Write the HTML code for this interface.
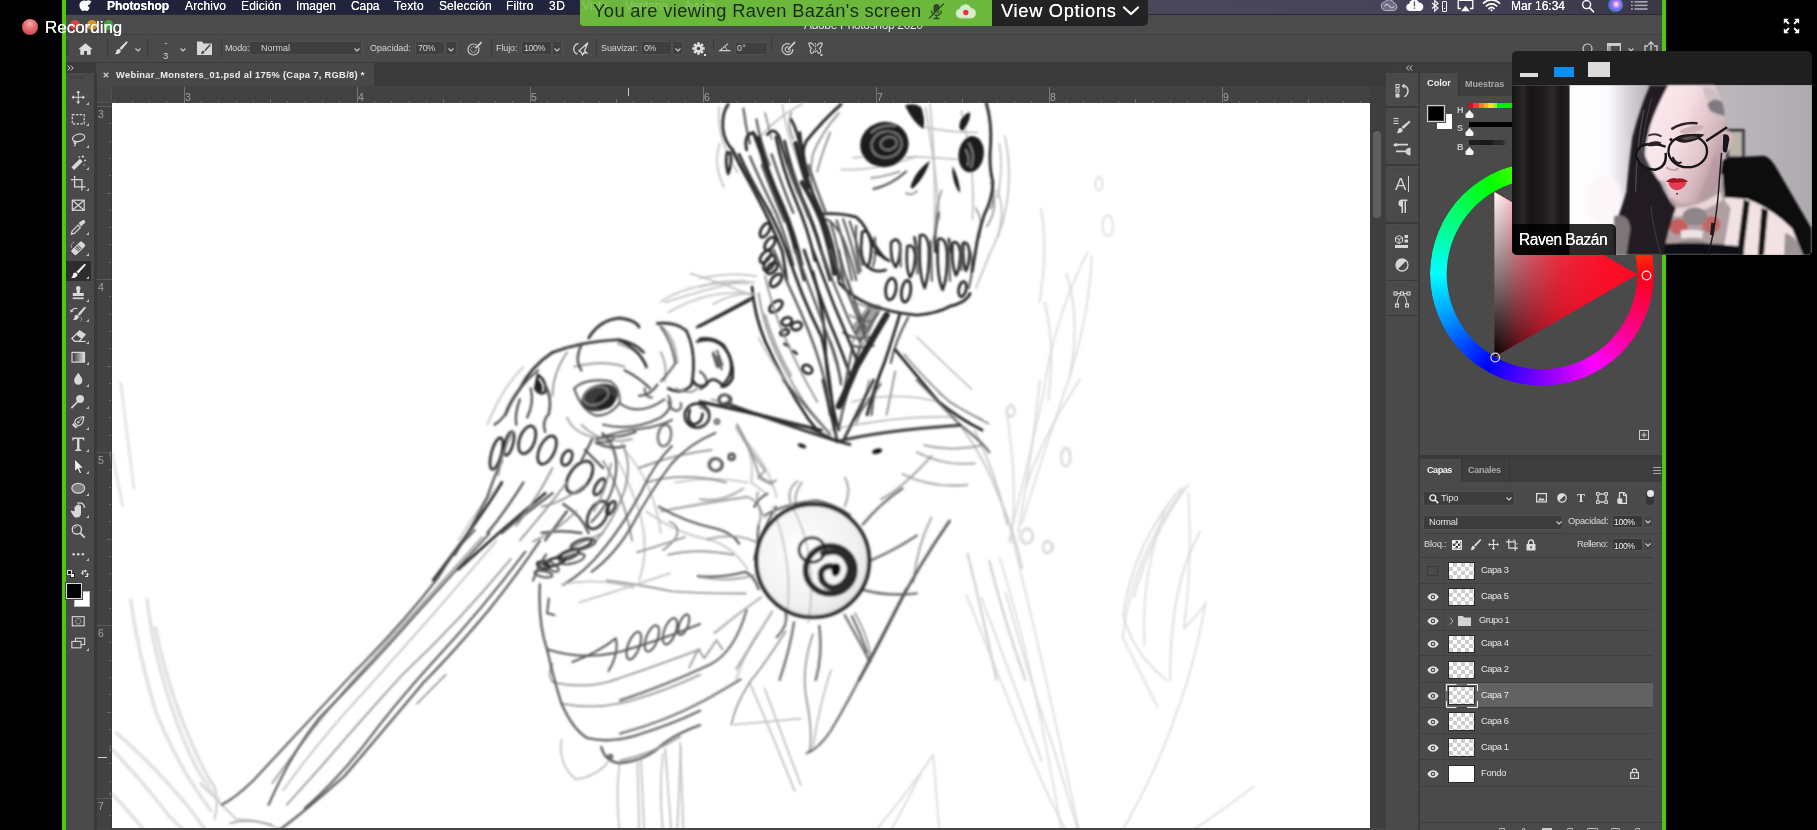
<!DOCTYPE html>
<html><head><meta charset="utf-8">
<style>
*{box-sizing:border-box;margin:0;padding:0}
html,body{width:1817px;height:830px;overflow:hidden;background:#000;font-family:"Liberation Sans",sans-serif;}
.a{position:absolute}
.t{position:absolute;white-space:nowrap;color:#ddd;line-height:1;will-change:transform}
svg{overflow:visible}
</style></head><body>
<!-- base -->

<div class="a" style="left:62px;top:0;width:4px;height:830px;background:#4cc713"></div>
<div class="a" style="left:1662px;top:0;width:4px;height:830px;background:#4cc713"></div>
<div class="a" id="ps" style="left:66px;top:0;width:1596px;height:830px;background:#4a4a4a;overflow:hidden">
<div class="a" style="left:0;top:0;width:1596px;height:14px;background:linear-gradient(90deg,#1f2239 0,#22253f 500px,#3a3750 800px,#4b4659 1100px,#46425a 1350px,#3b3849 1596px)"></div>
<div class="a" style="left:0;top:14px;width:1596px;height:21px;background:#4b4b4b;border-top:1px solid #2a2a30;border-bottom:1px solid #414141"></div>
<div class="a" style="left:0;top:35px;width:1596px;height:27px;background:#4a4a4a"></div>
<div class="a" style="left:0;top:62px;width:1596px;height:25px;background:#3a3a3a"></div>
<div class="a" style="left:30px;top:63px;width:278px;height:23px;background:#484848"></div>
<div class="a" style="left:0;top:73px;width:29px;height:757px;background:#4a4a4a"></div>
<div class="a" style="left:31px;top:86px;width:1273px;height:17px;background:#424242"></div>
<div class="a" style="left:31px;top:103px;width:15px;height:727px;background:#424242"></div>
<div class="a" style="left:1304px;top:86px;width:16px;height:744px;background:#3e3e40"></div>
<div class="a" style="left:1320px;top:62px;width:276px;height:768px;background:#3a3a3a"></div>
<div class="a" style="left:1320px;top:73px;width:32px;height:757px;background:#4a4a4a"></div>
<div class="a" style="left:1354px;top:73px;width:242px;height:382px;background:#4a4a4a"></div>
<div class="a" style="left:1354px;top:459px;width:242px;height:371px;background:#4a4a4a"></div>
</div>
<div class="a" id="cv" style="left:112px;top:103px;width:1258px;height:727px;background:#fff;overflow:hidden"></div>

<!-- canvas -->
<svg class="a" style="left:112px;top:103px" width="1258" height="727" viewBox="112 103 1258 727"><defs><filter id="sb" x="-2%" y="-2%" width="104%" height="104%"><feGaussianBlur stdDeviation="0.9"/></filter><filter id="sb2" x="-2%" y="-2%" width="104%" height="104%"><feGaussianBlur stdDeviation="1.2"/></filter><radialGradient id="eg" cx=".4" cy=".4" r=".7"><stop offset="0" stop-color="#fff"/><stop offset=".7" stop-color="#f1f1f1"/><stop offset="1" stop-color="#dcdcdc"/></radialGradient></defs>
<g filter="url(#sb)">
<g transform="translate(600,100) scale(0.36153)">
<g fill="none" stroke="#bdbdbd" stroke-width="4.98" opacity="0.9" stroke-linecap="round" stroke-linejoin="round">
<path d="M330 20Q320 100 380 200"/>
<path d="M1100 250Q1130 330 1080 420Q1060 470 1040 520"/>
<path d="M900 20Q930 200 940 330"/>
<path d="M700 160Q800 150 1000 165"/>
<path d="M560 10Q470 60 430 120"/>
<path d="M1120 100Q1150 250 1100 380"/>
<path d="M250 480Q320 500 420 540"/>
<path d="M180 560Q300 520 400 500"/>
<path d="M1000 30Q1040 200 1030 330"/>
</g>
<g fill="none" stroke="#d6d6d6" stroke-width="4.98" opacity="0.9" stroke-linecap="round" stroke-linejoin="round">
<path d="M1230 560Q1260 680 1240 830"/>
<path d="M1290 480Q1330 600 1300 760"/>
<path d="M1220 300Q1240 420 1215 560"/>
</g>
<g fill="none" stroke="#8e8e8e" stroke-width="4.98" opacity="0.9" stroke-linecap="round" stroke-linejoin="round">
<path d="M1085 255Q1102 300 1070 350"/>
<path d="M1040 300Q1060 330 1050 380"/>
<path d="M930 380Q925 300 945 250"/>
</g>
<g fill="none" stroke="#2a2a2a" stroke-width="7.47" opacity="1" stroke-linecap="round" stroke-linejoin="round">
<path d="M725 365Q745 355 750 395Q752 440 740 462Q725 450 722 410z"/>
<path d="M805 395Q820 375 830 400Q832 440 818 462Q803 445 805 395z"/>
<path d="M850 405Q868 395 872 430Q870 475 858 490Q845 470 850 405z"/>
<path d="M885 375Q905 365 910 410Q912 480 898 520Q880 480 885 375z"/>
<path d="M935 385Q955 375 960 420Q962 490 948 525Q930 490 935 385z"/>
<path d="M975 395Q992 385 997 425Q995 470 985 485Q972 460 975 395z"/>
<path d="M1005 395Q1020 390 1022 425Q1020 460 1012 472Q1002 450 1005 395z"/>
<path d="M745 375Q770 420 790 440"/>
<path d="M760 420L800 445"/>
<path d="M740 460Q760 480 790 470"/>
<path d="M870 380L875 410"/>
<path d="M925 380L928 420"/>
<path d="M965 385L968 420"/>
</g>
<g fill="none" stroke="#555" stroke-width="6.47" opacity="0.9" stroke-linecap="round" stroke-linejoin="round">
<path d="M830 395L832 460"/>
<path d="M875 400L878 480"/>
<path d="M915 390L918 500"/>
<path d="M965 395L968 500"/>
<path d="M1000 400L1000 470"/>
<path d="M760 380Q765 430 755 460"/>
<path d="M1025 420Q1035 470 1020 520"/>
</g>
</g>
<g transform="translate(700,100) scale(0.21692)">
<g fill="none" stroke="#bdbdbd" stroke-width="8.30" opacity="0.9" stroke-linecap="round" stroke-linejoin="round">
<path d="M380 20Q400 200 520 420"/>
<path d="M1060 20Q1090 300 1080 620"/>
<path d="M1010 120Q1150 150 1280 150"/>
<path d="M650 320Q800 330 1000 260"/>
<path d="M1380 200Q1400 330 1370 450"/>
<path d="M90 200Q60 300 110 400"/>
</g>
<g fill="none" stroke="#8e8e8e" stroke-width="9.13" opacity="0.9" stroke-linecap="round" stroke-linejoin="round">
<path d="M640 60Q560 150 520 250Q500 350 520 420"/>
<path d="M600 150Q560 250 540 330"/>
<path d="M790 360Q850 352 920 330"/>
<path d="M950 430Q980 442 1000 420"/>
<path d="M1340 380Q1370 420 1340 500"/>
<path d="M300 60Q320 140 330 180"/>
<path d="M420 60Q400 120 430 180"/>
<path d="M190 300Q250 420 330 520"/>
</g>
<g fill="none" stroke="#555" stroke-width="10.79" opacity="0.95" stroke-linecap="round" stroke-linejoin="round">
<path d="M800 410Q880 392 950 330"/>
<path d="M200 40Q210 120 230 200"/>
<path d="M260 90Q280 200 320 300"/>
<path d="M600 560Q640 680 660 830"/>
<path d="M630 555Q670 680 700 830"/>
<path d="M660 550Q700 660 730 800"/>
<path d="M690 560Q720 650 750 760"/>
<path d="M720 580Q712 680 740 790"/>
<path d="M570 545Q620 560 660 640Q700 740 720 830"/>
<path d="M1100 520Q1090 580 1080 640"/>
</g>
<g fill="none" stroke="#2a2a2a" stroke-width="13.28" opacity="1" stroke-linecap="round" stroke-linejoin="round">
<path d="M130 20Q100 60 105 130Q110 190 150 230Q180 300 230 380"/>
<path d="M125 240Q115 290 130 340Q150 290 140 245z"/>
<path d="M215 230Q200 160 245 150Q270 180 290 280Q330 420 400 560Q440 680 480 830"/>
<path d="M310 160Q340 120 365 170Q400 300 450 420Q520 560 560 700L600 830"/>
<path d="M420 90Q450 140 470 250Q490 380 560 520Q620 660 640 830"/>
<path d="M245 150Q300 300 370 470Q420 600 440 700"/>
<path d="M180 250Q230 360 300 480Q380 620 420 760"/>
<path d="M350 170Q380 320 440 460Q500 600 530 740"/>
<path d="M650 20Q560 100 490 190Q470 230 480 270"/>
<path d="M570 525Q650 520 720 540Q770 580 790 660L850 730"/>
<path d="M1320 15Q1345 100 1340 200Q1330 300 1350 380Q1350 450 1310 530Q1280 620 1270 700L1255 790"/>
</g>
<g fill="none" stroke="#2a2a2a" stroke-width="13.28" opacity="1" stroke-linecap="round" stroke-linejoin="round">
<path d="M270 170Q310 330 380 480Q440 620 470 760"/>
<path d="M390 190Q420 320 470 450Q530 580 560 700"/>
<path d="M150 230Q200 330 260 440Q330 570 380 700L400 830"/>
<path d="M460 150Q470 250 500 350"/>
<ellipse cx="300" cy="600" rx="36" ry="18" transform="rotate(-60 300 600)"/>
<ellipse cx="322" cy="662" rx="34" ry="18" transform="rotate(-55 322 662)"/>
<ellipse cx="302" cy="722" rx="34" ry="18" transform="rotate(-50 302 722)"/>
<ellipse cx="332" cy="775" rx="32" ry="18" transform="rotate(-45 332 775)"/>
</g>
<g fill="none" stroke="#555" stroke-width="11.62" opacity="0.95" stroke-linecap="round" stroke-linejoin="round">
<path d="M330 250Q380 400 430 520"/>
<path d="M230 260Q290 400 350 520Q400 640 430 760"/>
<path d="M500 300Q540 420 580 520"/>
<path d="M410 300Q450 420 500 540"/>
<path d="M285 300Q330 420 390 560"/>
</g>
<g fill="none" stroke="#2a2a2a" stroke-width="21.57" opacity="1" stroke-linecap="round" stroke-linejoin="round">
<path d="M470 380Q520 460 560 560Q600 680 620 800"/>
<path d="M440 200Q470 320 500 400"/>
</g>
<g fill="#1b1b1b" opacity="1" stroke="none">
<ellipse cx="850" cy="205" rx="112" ry="104" transform="rotate(-15 850 205)"/>
<ellipse cx="1250" cy="250" rx="58" ry="84" transform="rotate(8 1250 250)"/>
<path d="M945 25Q990 10 1020 35Q1040 90 1030 135Q980 100 945 25z"/>
<path d="M1195 120Q1200 70 1245 55Q1250 90 1215 140Q1200 150 1195 120z"/>
<path d="M1060 280Q1040 350 985 405Q965 415 975 385Q1000 320 1060 280z"/>
<path d="M1165 305Q1195 360 1200 430Q1180 410 1170 370Q1160 330 1165 305z"/>
</g>
<g fill="none" stroke="#8a8a8a" stroke-width="9.96" opacity="0.8" stroke-linecap="round" stroke-linejoin="round">
<ellipse cx="860" cy="205" rx="70" ry="60" transform="rotate(-15 860 205)"/>
<ellipse cx="870" cy="200" rx="38" ry="30" transform="rotate(-15 870 200)"/>
<path d="M790 150Q830 110 900 120"/>
<path d="M1240 200Q1270 250 1250 310"/>
<path d="M1225 230Q1245 260 1235 300"/>
</g>
</g>
<g transform="translate(700,250) scale(0.21692)">
<g fill="none" stroke="#bdbdbd" stroke-width="8.30" opacity="0.9" stroke-linecap="round" stroke-linejoin="round">
<path d="M0 130Q150 100 260 120"/>
<path d="M0 170Q100 130 250 150"/>
<path d="M1000 400Q1100 500 1250 640"/>
<path d="M600 830Q900 760 1200 770"/>
<path d="M1100 660Q1200 740 1300 780"/>
<path d="M700 700Q900 650 1100 700"/>
<path d="M60 250Q150 200 230 200"/>
</g>
<g fill="none" stroke="#8e8e8e" stroke-width="9.13" opacity="0.9" stroke-linecap="round" stroke-linejoin="round">
<path d="M270 200Q290 340 350 470Q420 620 520 760"/>
<path d="M940 480Q1040 600 1150 700Q1250 760 1330 800"/>
<path d="M700 240Q760 260 820 270"/>
<path d="M690 300Q740 330 800 330"/>
<path d="M300 300Q340 440 420 580"/>
<path d="M780 600Q760 700 720 800"/>
<path d="M900 560Q880 660 860 760"/>
</g>
<g fill="none" stroke="#555" stroke-width="10.79" opacity="0.95" stroke-linecap="round" stroke-linejoin="round">
<path d="M640 0Q660 100 700 200"/>
<path d="M560 0Q600 120 660 260Q700 360 740 430"/>
<path d="M960 310Q900 420 880 520"/>
<path d="M820 290Q780 360 740 420"/>
<path d="M780 280Q750 330 720 380"/>
<path d="M60 480L80 540"/>
<path d="M80 490L100 550"/>
<path d="M0 560Q30 580 30 610Q20 640 0 640"/>
<ellipse cx="115" cy="690" rx="30" ry="22" transform="rotate(0 115 690)"/>
<path d="M700 440Q760 460 800 440"/>
<path d="M660 380Q720 420 790 400"/>
<path d="M850 520Q800 640 790 760"/>
</g>
<g fill="none" stroke="#2a2a2a" stroke-width="13.28" opacity="1" stroke-linecap="round" stroke-linejoin="round">
<path d="M640 150Q700 220 780 250Q880 290 1000 300Q1100 290 1150 260Q1230 240 1245 200"/>
<ellipse cx="880" cy="180" rx="24" ry="50" transform="rotate(8 880 180)"/>
<ellipse cx="950" cy="190" rx="21" ry="50" transform="rotate(8 950 190)"/>
<ellipse cx="1210" cy="180" rx="17" ry="35" transform="rotate(12 1210 180)"/>
<path d="M920 300Q890 400 850 520Q800 640 770 760"/>
<path d="M900 460Q1000 580 1100 700Q1200 780 1300 830"/>
<path d="M400 0Q460 200 560 400Q600 560 620 830"/>
<path d="M480 0Q540 180 600 340Q660 480 700 600"/>
<path d="M520 100Q580 300 580 500Q600 700 640 830"/>
<path d="M240 170Q250 300 300 420Q380 600 500 780L540 830"/>
<path d="M230 230Q120 290 0 350"/>
<path d="M0 700Q200 740 420 800L560 830"/>
<ellipse cx="320" cy="60" rx="40" ry="20" transform="rotate(-60 320 60)"/>
<ellipse cx="350" cy="140" rx="35" ry="19" transform="rotate(-50 350 140)"/>
<ellipse cx="350" cy="260" rx="35" ry="20" transform="rotate(-40 350 260)"/>
<ellipse cx="400" cy="330" rx="24" ry="18" transform="rotate(-20 400 330)"/>
<ellipse cx="445" cy="350" rx="24" ry="18" transform="rotate(-20 445 350)"/>
<ellipse cx="390" cy="380" rx="20" ry="13" transform="rotate(-20 390 380)"/>
<path d="M390 432L410 444"/>
<path d="M430 466L445 478"/>
<ellipse cx="495" cy="550" rx="24" ry="18" transform="rotate(35 495 550)"/>
<path d="M0 410Q60 400 110 440Q160 520 150 590Q130 630 100 630"/>
</g>
<g fill="none" stroke="#555" stroke-width="11.62" opacity="0.95" stroke-linecap="round" stroke-linejoin="round">
<path d="M340 0Q400 150 470 300Q540 460 580 620L600 760"/>
<path d="M440 0Q500 160 560 320Q620 470 650 600"/>
<path d="M600 0Q640 100 690 220Q740 340 770 420"/>
<path d="M680 140Q720 260 760 360"/>
<path d="M700 460Q680 560 660 680"/>
<path d="M740 440Q700 560 680 660Q650 760 640 830"/>
<path d="M600 420Q640 520 650 620"/>
</g>
<g fill="none" stroke="#2a2a2a" stroke-width="12.45" opacity="1" stroke-linecap="round" stroke-linejoin="round">
<path d="M520 0Q570 130 620 260Q680 400 720 500"/>
</g>
<g fill="none" stroke="#8e8e8e" stroke-width="9.13" opacity="0.9" stroke-linecap="round" stroke-linejoin="round">
<path d="M300 120Q330 260 390 400Q450 540 540 700"/>
<path d="M760 300Q730 380 700 430"/>
<path d="M800 330Q770 400 745 450"/>
</g>
<g fill="none" stroke="#2a2a2a" stroke-width="29.87" opacity="1" stroke-linecap="round" stroke-linejoin="round">
<path d="M860 300Q800 400 720 540Q680 640 640 720"/>
</g>
<g fill="none" stroke="#444" stroke-width="37.34" opacity="0.5" stroke-linecap="round" stroke-linejoin="round">
<path d="M820 270Q780 330 740 380"/>
<path d="M790 265Q760 310 725 350"/>
</g>
</g>
<g transform="translate(350,280) scale(0.36153)">
<g fill="none" stroke="#bdbdbd" stroke-width="4.98" opacity="0.9" stroke-linecap="round" stroke-linejoin="round">
<path d="M860 60Q950 0 1100 10"/>
<path d="M880 90Q1000 20 1120 40"/>
<path d="M480 240Q420 300 380 400"/>
<path d="M700 430Q760 520 800 640Q830 740 800 830"/>
<path d="M760 470Q840 560 860 700"/>
<path d="M420 560Q360 620 300 720"/>
<path d="M1100 450Q1160 520 1180 600"/>
<path d="M900 560Q1000 540 1100 560"/>
<path d="M820 640Q900 700 1000 720Q1060 740 1100 800"/>
<path d="M1130 160Q1180 260 1300 400"/>
<path d="M1080 420Q1120 480 1110 560L1150 590"/>
</g>
<g fill="none" stroke="#8e8e8e" stroke-width="4.98" opacity="0.9" stroke-linecap="round" stroke-linejoin="round">
<path d="M860 640Q960 620 1100 600Q1150 620 1130 680"/>
<path d="M545 310Q560 340 550 370"/>
<path d="M600 380Q620 430 700 440"/>
<path d="M640 400Q700 460 780 440"/>
<path d="M850 120Q900 150 905 230"/>
<path d="M860 200Q880 240 870 280"/>
<path d="M700 700Q600 740 520 800"/>
<path d="M1000 330Q1150 380 1300 430"/>
<path d="M740 175L800 200"/>
<path d="M620 240Q700 220 760 240"/>
<path d="M1250 560Q1220 600 1240 640"/>
</g>
<g fill="none" stroke="#555" stroke-width="5.97" opacity="0.95" stroke-linecap="round" stroke-linejoin="round">
<path d="M700 400Q780 420 860 380Q900 350 880 320"/>
<path d="M745 340Q800 380 870 330"/>
<path d="M1005 200L1020 240"/>
<path d="M1015 195L1030 235"/>
<path d="M860 130Q890 170 900 230Q880 260 860 280"/>
<path d="M620 300Q650 270 720 280Q750 300 745 340Q720 375 680 375Q640 360 620 300"/>
<ellipse cx="870" cy="430" rx="18" ry="30" transform="rotate(10 870 430)"/>
<ellipse cx="1010" cy="510" rx="18" ry="17" transform="rotate(0 1010 510)"/>
<ellipse cx="1055" cy="490" rx="8" ry="8" transform="rotate(0 1055 490)"/>
<ellipse cx="1035" cy="330" rx="14" ry="13" transform="rotate(0 1035 330)"/>
<path d="M880 335Q885 360 905 362Q920 355 915 340"/>
<path d="M815 300Q815 325 835 325"/>
<ellipse cx="1015" cy="392" rx="6" ry="6" transform="rotate(0 1015 392)"/>
<path d="M1150 650Q1200 620 1290 610Q1340 620 1383 650"/>
<path d="M1130 680Q1120 760 1150 830"/>
</g>
<g fill="none" stroke="#2a2a2a" stroke-width="7.47" opacity="1" stroke-linecap="round" stroke-linejoin="round">
<path d="M660 160Q690 110 745 105Q790 110 800 130"/>
<path d="M560 200Q640 170 740 165Q800 190 820 240"/>
<path d="M745 165Q790 175 812 200"/>
<path d="M560 200Q500 240 470 300Q440 340 430 372"/>
<path d="M930 140Q960 200 945 290Q920 320 880 300"/>
<path d="M960 170Q1020 150 1050 210Q1065 260 1030 290Q1000 260 985 290Q960 300 950 280"/>
<path d="M850 120Q900 115 930 140"/>
<path d="M960 130L1110 50"/>
<path d="M1040 340Q1200 400 1330 440L1383 455"/>
<ellipse cx="405" cy="480" rx="14" ry="45" transform="rotate(15 405 480)"/>
<ellipse cx="440" cy="452" rx="11" ry="34" transform="rotate(15 440 452)"/>
<ellipse cx="490" cy="442" rx="21" ry="40" transform="rotate(20 490 442)"/>
<ellipse cx="545" cy="470" rx="21" ry="42" transform="rotate(25 545 470)"/>
<ellipse cx="600" cy="492" rx="13" ry="22" transform="rotate(25 600 492)"/>
<ellipse cx="635" cy="545" rx="28" ry="50" transform="rotate(35 635 545)"/>
<ellipse cx="690" cy="572" rx="11" ry="25" transform="rotate(30 690 572)"/>
<ellipse cx="685" cy="650" rx="24" ry="42" transform="rotate(30 685 650)"/>
<ellipse cx="722" cy="630" rx="9" ry="20" transform="rotate(30 722 630)"/>
<ellipse cx="640" cy="730" rx="30" ry="11" transform="rotate(-20 640 730)"/>
<ellipse cx="605" cy="760" rx="30" ry="10" transform="rotate(-20 605 760)"/>
<ellipse cx="565" cy="780" rx="30" ry="10" transform="rotate(-15 565 780)"/>
<ellipse cx="535" cy="790" rx="18" ry="9" transform="rotate(20 535 790)"/>
<ellipse cx="960" cy="375" rx="34" ry="33" transform="rotate(0 960 375)"/>
<path d="M940 360Q930 390 950 400Q975 395 975 370"/>
<path d="M520 262Q545 280 540 310Q525 320 512 300z"/>
<path d="M420 560Q360 660 230 830"/>
<path d="M540 590Q420 690 300 800"/>
</g>
<g fill="none" stroke="#555" stroke-width="6.97" opacity="0.95" stroke-linecap="round" stroke-linejoin="round">
<path d="M520 250Q470 290 440 350Q430 380 400 400"/>
<path d="M540 290Q560 320 550 370Q530 390 540 420"/>
<path d="M500 300Q510 340 490 380"/>
<path d="M470 330Q455 370 460 400"/>
<path d="M420 500Q400 540 380 600Q340 680 290 760"/>
<path d="M560 590Q480 650 420 700"/>
<path d="M700 430Q740 440 790 420"/>
<path d="M680 450Q720 470 760 460"/>
<path d="M650 470L700 520"/>
<path d="M670 440L640 500"/>
<path d="M590 620Q640 650 660 700"/>
<path d="M530 700Q580 690 640 700"/>
<path d="M600 640L540 720"/>
<path d="M480 560Q430 640 380 700"/>
<path d="M760 250Q800 270 830 300"/>
<path d="M640 180Q620 220 640 250"/>
<path d="M850 290Q830 320 800 320"/>
</g>
<g fill="none" stroke="#8e8e8e" stroke-width="5.48" opacity="0.9" stroke-linecap="round" stroke-linejoin="round">
<path d="M560 520Q520 600 460 680"/>
<path d="M600 560Q540 640 470 720"/>
<path d="M700 500Q760 600 780 720"/>
<path d="M900 300Q940 320 960 300"/>
<path d="M600 200Q560 260 560 320"/>
<path d="M450 420Q420 480 410 540"/>
<path d="M800 520Q900 480 1000 470"/>
<path d="M820 560Q920 530 1040 560"/>
<path d="M880 760Q960 740 1060 760"/>
</g>
<g fill="#3a3a3a" opacity="1" stroke="none">
<ellipse cx="690" cy="325" rx="52" ry="36" transform="rotate(-20 690 325)"/>
</g>
<g fill="#222" opacity="1" stroke="none">
<ellipse cx="705" cy="335" rx="28" ry="22" transform="rotate(-20 705 335)"/>
<path d="M515 270Q535 285 532 308Q522 312 514 298z"/>
</g>
<g fill="none" stroke="#888" stroke-width="4.98" opacity="0.9" stroke-linecap="round" stroke-linejoin="round">
<ellipse cx="680" cy="320" rx="36" ry="24" transform="rotate(-20 680 320)"/>
</g>
</g>
<g transform="translate(520,420) scale(0.21692)">
<g fill="none" stroke="#8e8e8e" stroke-width="9.13" opacity="0.9" stroke-linecap="round" stroke-linejoin="round">
<path d="M470 110Q520 200 480 330Q430 470 340 570"/>
<path d="M690 470Q740 490 720 540Q700 570 660 600"/>
<path d="M540 610Q640 580 760 540"/>
<path d="M400 740Q560 760 700 790Q860 800 1040 800"/>
<path d="M1000 20Q1060 120 1100 250Q1140 300 1180 280"/>
<path d="M100 400Q200 380 300 300"/>
<path d="M60 560Q160 520 260 420"/>
<path d="M420 200Q400 320 340 420"/>
</g>
<g fill="none" stroke="#555" stroke-width="10.79" opacity="0.9" stroke-linecap="round" stroke-linejoin="round">
<path d="M350 90Q450 50 560 40Q640 30 700 0"/>
<path d="M380 60Q460 130 440 260Q420 380 330 470"/>
<path d="M700 120Q620 200 560 330Q480 480 380 600Q300 700 200 760"/>
<path d="M900 60Q780 110 700 200Q600 330 520 480Q440 620 330 700"/>
<path d="M640 400Q760 470 900 500Q980 520 1010 570"/>
<path d="M820 720Q920 730 1040 700Q1080 720 1100 780"/>
<path d="M1140 340Q1100 360 1080 400"/>
<path d="M1180 400Q1120 500 1080 640"/>
<path d="M360 100Q400 110 430 90"/>
<path d="M120 620Q80 680 60 740"/>
</g>
</g>
<g transform="translate(700,380) scale(0.36153)">
<g fill="url(#eg)" opacity="1" stroke="none">
<circle cx="312" cy="500" r="156"/>
</g>
<g fill="none" stroke="#d6d6d6" stroke-width="4.98" opacity="0.9" stroke-linecap="round" stroke-linejoin="round">
<path d="M850 100Q880 300 860 450"/>
<path d="M940 0Q920 200 880 420"/>
<path d="M1050 0Q950 150 900 300"/>
<path d="M1330 300Q1200 450 1170 650Q1200 760 1290 830"/>
<path d="M1383 420Q1300 560 1300 830"/>
<path d="M1350 290Q1250 420 1200 600"/>
<ellipse cx="860" cy="85" rx="10" ry="18" transform="rotate(0 860 85)"/>
<ellipse cx="1012" cy="212" rx="13" ry="26" transform="rotate(0 1012 212)"/>
<ellipse cx="905" cy="430" rx="14" ry="22" transform="rotate(0 905 430)"/>
<ellipse cx="960" cy="462" rx="12" ry="18" transform="rotate(0 960 462)"/>
</g>
<g fill="none" stroke="#bdbdbd" stroke-width="4.98" opacity="0.9" stroke-linecap="round" stroke-linejoin="round">
<path d="M720 125Q790 220 830 330Q870 420 890 520"/>
<path d="M760 140Q820 260 850 400"/>
<path d="M740 480Q780 640 820 830"/>
<path d="M800 500Q840 660 900 830"/>
<path d="M200 350Q260 500 240 660"/>
<path d="M250 340Q330 480 300 670"/>
<path d="M160 700Q120 760 100 830"/>
</g>
<g fill="none" stroke="#8e8e8e" stroke-width="4.98" opacity="0.9" stroke-linecap="round" stroke-linejoin="round">
<path d="M100 130Q140 200 180 250L160 270L200 290"/>
<path d="M640 380Q600 460 590 560"/>
<path d="M600 200Q680 240 760 230"/>
<path d="M560 260Q640 300 740 290"/>
<path d="M620 180Q700 200 780 180"/>
<path d="M160 450Q100 420 20 440"/>
<path d="M150 540Q80 560 0 545"/>
<path d="M170 600Q100 650 40 700"/>
<path d="M200 640Q150 720 100 800"/>
<path d="M400 350Q420 300 400 270"/>
<path d="M250 340Q240 300 270 280"/>
<path d="M180 380Q150 340 160 310"/>
<path d="M500 330Q560 300 640 210"/>
<path d="M0 330Q60 340 120 300"/>
</g>
<g fill="none" stroke="#555" stroke-width="7.47" opacity="1" stroke-linecap="round" stroke-linejoin="round">
<path d="M690 390Q600 520 540 640Q480 760 440 830"/>
</g>
<g fill="none" stroke="#555" stroke-width="5.97" opacity="0.95" stroke-linecap="round" stroke-linejoin="round">
<path d="M260 670Q250 740 220 830"/>
<path d="M330 680Q340 760 320 830"/>
<path d="M400 650Q440 720 470 780"/>
<path d="M450 580Q520 600 600 590"/>
<path d="M470 500Q540 470 600 430"/>
<path d="M450 400Q500 340 560 300"/>
<path d="M360 150L230 0"/>
<path d="M420 120L500 10"/>
<path d="M600 0Q650 50 720 125Q780 170 800 200"/>
<ellipse cx="45" cy="235" rx="18" ry="17" transform="rotate(0 45 235)"/>
<ellipse cx="88" cy="212" rx="8" ry="8" transform="rotate(0 88 212)"/>
<ellipse cx="68" cy="55" rx="15" ry="14" transform="rotate(0 68 55)"/>
<path d="M0 75Q25 80 25 105Q20 125 0 128"/>
</g>
<g fill="none" stroke="#2a2a2a" stroke-width="7.47" opacity="1" stroke-linecap="round" stroke-linejoin="round">
<path d="M0 60Q150 90 300 130L380 170"/>
<path d="M380 170Q500 140 720 125"/>
<path d="M380 170L340 0"/>
<path d="M400 160L480 0"/>
<ellipse cx="310" cy="470" rx="36" ry="34" transform="rotate(0 310 470)"/>
</g>
<g fill="none" stroke="#2a2a2a" stroke-width="10.95" opacity="1" stroke-linecap="round" stroke-linejoin="round">
<circle cx="312" cy="500" r="156"/>
</g>
<g fill="none" stroke="#2a2a2a" stroke-width="15.93" opacity="1" stroke-linecap="round" stroke-linejoin="round">
<ellipse cx="360" cy="525" rx="68" ry="66" transform="rotate(0 360 525)"/>
<path d="M340 480Q400 460 415 520Q410 570 365 575Q330 565 335 530Q350 505 380 520"/>
</g>
<g fill="#111" opacity="1" stroke="none">
<ellipse cx="376" cy="525" rx="12" ry="18" transform="rotate(10 376 525)"/>
<ellipse cx="490" cy="197" rx="14" ry="7" transform="rotate(-15 490 197)"/>
<ellipse cx="282" cy="182" rx="12" ry="5" transform="rotate(20 282 182)"/>
</g>
</g>
<g transform="translate(200,530) scale(0.36153)">
<g fill="none" stroke="#bdbdbd" stroke-width="4.98" opacity="0.9" stroke-linecap="round" stroke-linejoin="round">
<path d="M0 700Q60 760 100 800Q160 800 230 830"/>
<path d="M820 30Q650 230 470 430Q330 580 230 720"/>
<path d="M1160 650Q1150 740 1160 830"/>
<path d="M1210 640L1215 830"/>
<path d="M1280 620Q1270 720 1280 830"/>
<path d="M1330 600L1320 830"/>
<path d="M1000 580Q990 650 1040 690Q1100 680 1130 640"/>
<path d="M20 680Q60 720 40 800"/>
<path d="M1000 150Q1100 130 1200 160"/>
<path d="M1050 200Q1150 170 1300 120"/>
</g>
<g fill="none" stroke="#8e8e8e" stroke-width="4.98" opacity="0.9" stroke-linecap="round" stroke-linejoin="round">
<path d="M780 20Q600 220 420 420Q300 560 200 700"/>
<path d="M860 80Q720 250 560 400Q450 520 330 660L240 760"/>
<path d="M1000 480Q1100 500 1200 470Q1300 440 1383 400"/>
<path d="M975 370Q960 400 975 420Q1050 440 1130 420Q1250 380 1383 330"/>
<path d="M600 480L680 400"/>
</g>
<g fill="none" stroke="#555" stroke-width="5.97" opacity="0.95" stroke-linecap="round" stroke-linejoin="round">
<path d="M760 0Q700 60 660 130Q560 260 420 400Q280 550 150 690Q100 740 60 760"/>
<path d="M800 10Q700 120 600 230Q450 400 330 520Q250 620 190 760"/>
<path d="M900 60Q780 220 640 370Q540 480 450 600Q380 690 290 770"/>
<path d="M960 330Q1050 360 1150 340Q1260 310 1383 260"/>
<path d="M1030 365Q1100 340 1150 300Q1160 340 1130 390"/>
<ellipse cx="1200" cy="320" rx="16" ry="40" transform="rotate(20 1200 320)"/>
<ellipse cx="1250" cy="300" rx="16" ry="38" transform="rotate(20 1250 300)"/>
<ellipse cx="1300" cy="280" rx="16" ry="38" transform="rotate(20 1300 280)"/>
<ellipse cx="1338" cy="262" rx="12" ry="30" transform="rotate(20 1338 262)"/>
<ellipse cx="1060" cy="40" rx="35" ry="12" transform="rotate(-15 1060 40)"/>
<ellipse cx="1030" cy="80" rx="35" ry="12" transform="rotate(-15 1030 80)"/>
<ellipse cx="970" cy="100" rx="25" ry="10" transform="rotate(30 970 100)"/>
<ellipse cx="950" cy="122" rx="25" ry="8" transform="rotate(10 950 122)"/>
<path d="M965 190L960 230L980 235"/>
</g>
<g fill="none" stroke="#484848" stroke-width="6.72" opacity="0.85" stroke-linecap="round" stroke-linejoin="round">
<path d="M940 30Q880 120 800 220Q700 340 620 420Q520 540 400 680Q300 770 220 830"/>
<path d="M940 150Q935 260 960 330Q980 420 1000 480Q1030 550 1070 575Q1130 590 1200 570Q1300 540 1383 500"/>
<path d="M1110 600Q1120 640 1160 645Q1220 640 1260 610Q1300 570 1383 540"/>
<circle cx="1135" cy="627" r="5"/>
</g>
</g>
<g transform="translate(620,580) scale(0.30120)">
<g fill="none" stroke="#d6d6d6" stroke-width="5.98" opacity="0.9" stroke-linecap="round" stroke-linejoin="round">
<path d="M1150 50Q1250 300 1350 550Q1420 720 1480 830"/>
<path d="M1280 40Q1350 300 1440 560L1520 830"/>
<path d="M1200 60Q1300 320 1400 600"/>
<path d="M1040 580Q960 700 850 830"/>
<path d="M1040 580L1060 830"/>
<path d="M1000 640Q950 740 900 830"/>
</g>
<g fill="none" stroke="#bdbdbd" stroke-width="5.98" opacity="0.9" stroke-linecap="round" stroke-linejoin="round">
<path d="M70 600L80 830"/>
<path d="M150 560L170 830"/>
<path d="M200 540L210 830"/>
<path d="M380 480L600 460"/>
<path d="M430 340Q500 500 580 700"/>
<path d="M480 360Q540 520 600 680"/>
<path d="M700 300Q660 420 640 560"/>
</g>
<g fill="none" stroke="#8e8e8e" stroke-width="5.98" opacity="0.9" stroke-linecap="round" stroke-linejoin="round">
<path d="M550 170Q480 280 430 340Q380 420 370 480"/>
<path d="M640 180Q600 300 620 400Q640 500 630 570"/>
<path d="M0 600Q100 580 200 520"/>
<path d="M780 110Q830 200 830 260"/>
<path d="M230 290L260 230L280 260L320 200L340 230"/>
</g>
<g fill="none" stroke="#555" stroke-width="7.17" opacity="0.9" stroke-linecap="round" stroke-linejoin="round">
<path d="M950 30Q880 170 830 260Q760 400 700 500Q660 560 620 575"/>
<path d="M0 400Q150 350 300 280Q380 240 420 100"/>
<path d="M0 510Q150 470 280 400Q350 360 400 330"/>
<path d="M520 190Q560 150 550 110"/>
<path d="M770 120Q800 180 820 240"/>
</g>
</g>
<g transform="translate(1000,103) scale(0.87596)">
<g fill="none" stroke="#d6d6d6" stroke-width="1.85" opacity="0.9" stroke-linecap="round" stroke-linejoin="round">
<path d="M100 170Q60 250 50 330Q30 420 10 500"/>
<path d="M105 175Q100 260 70 340Q40 430 25 480"/>
<path d="M210 440Q150 520 140 610Q160 650 180 690"/>
<path d="M215 445Q220 520 210 600Q230 580 235 570Q220 650 200 700Q180 760 140 830"/>
<path d="M0 520Q40 650 70 830"/>
<path d="M10 480Q50 640 90 830"/>
<path d="M290 780Q250 810 220 830"/>
<ellipse cx="113" cy="92" rx="4" ry="8" transform="rotate(0 113 92)"/>
<ellipse cx="123" cy="140" rx="6" ry="12" transform="rotate(0 123 140)"/>
<ellipse cx="75" cy="405" rx="5" ry="10" transform="rotate(0 75 405)"/>
<ellipse cx="12" cy="352" rx="5" ry="5" transform="rotate(0 12 352)"/>
<ellipse cx="55" cy="507" rx="6" ry="6" transform="rotate(0 55 507)"/>
<ellipse cx="30" cy="495" rx="8" ry="8" transform="rotate(0 30 495)"/>
<path d="M190 460Q160 540 165 620"/>
</g>
</g>
<g transform="translate(100,600) scale(0.27720)">
<g fill="none" stroke="#dedede" stroke-width="12.99" opacity="0.9" stroke-linecap="round" stroke-linejoin="round">
<path d="M110 0Q140 200 200 400Q280 600 400 760"/>
<path d="M170 0Q200 250 300 500Q360 650 430 720"/>
<path d="M60 480Q200 600 330 760L380 830"/>
<path d="M45 540Q150 650 250 780L300 830"/>
<path d="M200 100Q260 400 400 660"/>
<path d="M45 700Q100 760 160 830"/>
</g>
<g fill="none" stroke="#8e8e8e" stroke-width="6.49" opacity="0.8" stroke-linecap="round" stroke-linejoin="round">
<path d="M470 805Q540 785 620 812"/>
</g>
</g>
<g transform="translate(112,103) scale(0.87566)">
<g fill="none" stroke="#e2e2e2" stroke-width="3.29" opacity="0.9" stroke-linecap="round" stroke-linejoin="round">
<path d="M10 320Q20 400 25 440"/>
<path d="M0 400Q8 440 12 460"/>
</g>
</g>
</g></svg>
<!-- opts -->
<div class="a" style="left:66px;top:40px;width:3px;height:16px;background:repeating-linear-gradient(0deg,#3c3c3c 0 1px,#4a4a4a 1px 2px)"></div>
<svg class="a" style="left:78px;top:43px" width="15" height="12" viewBox="0 0 15 12"><path d="M7.500 .3L.3 6.300h2v5.400h3.700V8h3v3.700h3.700V6.300h2z" fill="#ddd"/></svg>
<div class="a" style="left:106.5px;top:39px;width:1px;height:19px;background:#3c3c3c"></div>
<svg class="a" style="left:113.500px;top:41px" width="14" height="14" viewBox="0 0 14 14"><path d="M13.300 .5c.5.500.3 1-.1 1.500L7.500 9 5.500 7.300 12 .8c.4-.4.9-.7 1.300-.3z" fill="#ddd"/><path d="M4.800 8c1.200.2 2 1.100 2 2.200-.5 2.300-3.500 3.300-6.300 2.800 1.800-.8 1.600-2 2-3.300.3-1 1.300-1.800 2.300-1.700z" fill="#ddd"/></svg>
<svg class="a" style="left:134.5px;top:47.5px" width="6" height="4" viewBox="0 0 6 4"><path d="M.5 .5L3 3 5.500 .5" fill="none" stroke="#ccc" stroke-width="1.1"/></svg>
<div class="a" style="left:147.4px;top:39px;width:1px;height:19px;background:#3c3c3c"></div>
<div class="a" style="left:165.300px;top:42.500px;width:1.600px;height:1.600px;background:#ccc;border-radius:50%"></div>
<div class="t" style="left:163.30px;top:50.76px;font-size:9.50px;color:#d4d4d4;">3</div>
<svg class="a" style="left:180.3px;top:47.5px" width="6" height="4" viewBox="0 0 6 4"><path d="M.5 .5L3 3 5.500 .5" fill="none" stroke="#ccc" stroke-width="1.1"/></svg>
<svg class="a" style="left:197px;top:41px" width="15" height="14" viewBox="0 0 15 14"><path d="M0 .5h5l1.500 2H15V14H0z" fill="#d8d8d8"/><path d="M12.500 3.500L7.300 9.300l1 .9 5.200-5.800c.4-.7-.4-1.400-1-.9zM6.600 9.800c-1.300-.2-2 .8-2.100 2-.1.500-.5.800-.9 1 1.800.3 3.700-.2 4-1.800z" fill="#444"/></svg>
<div class="a" style="left:221.0px;top:39px;width:1px;height:19px;background:#3c3c3c"></div>
<div class="t" style="left:225.00px;top:43.68px;font-size:9.00px;letter-spacing:-0.152px;color:#d4d4d4;">Modo:</div>
<div class="a" style="left:249.0px;top:40.5px;width:113.0px;height:14.0px;background:#3f3f3f;border:1px solid #505050;border-radius:2px"></div>
<div class="t" style="left:261.00px;top:43.68px;font-size:9.00px;letter-spacing:0.000px;color:#d4d4d4;">Normal</div>
<svg class="a" style="left:353.5px;top:47.5px" width="6" height="4" viewBox="0 0 6 4"><path d="M.5 .5L3 3 5.500 .5" fill="none" stroke="#ccc" stroke-width="1.1"/></svg>
<div class="t" style="left:370.20px;top:43.68px;font-size:9.00px;letter-spacing:-0.027px;color:#d4d4d4;">Opacidad:</div>
<div class="a" style="left:415.0px;top:40.5px;width:30.0px;height:14.0px;background:#3f3f3f;border:1px solid #505050;border-radius:2px"></div>
<div class="a" style="left:445.0px;top:40.5px;width:12.0px;height:14.0px;background:#3f3f3f;border:1px solid #505050;border-radius:2px"></div>
<div class="t" style="left:417.80px;top:43.68px;font-size:9.00px;letter-spacing:-0.356px;color:#d4d4d4;">70%</div>
<svg class="a" style="left:448.2px;top:47.5px" width="6" height="4" viewBox="0 0 6 4"><path d="M.5 .5L3 3 5.500 .5" fill="none" stroke="#ccc" stroke-width="1.1"/></svg>
<svg class="a" style="left:467px;top:41px" width="16" height="15" viewBox="0 0 16 15"><circle cx="6.500" cy="8.500" r="5.500" fill="none" stroke="#ccc" stroke-width="1.200"/><circle cx="6.500" cy="8.500" r="2.800" fill="none" stroke="#ccc" stroke-width="1" stroke-dasharray="1.500 1"/><path d="M14.800 .8c.6.500.5 1.100.1 1.600L9 8 7.700 6.800 13.400 1c.4-.4.900-.6 1.400-.2z" fill="#ddd" stroke="#4a4a4a" stroke-width=".6"/></svg>
<div class="a" style="left:490.7px;top:39px;width:1px;height:19px;background:#3c3c3c"></div>
<div class="t" style="left:495.60px;top:43.68px;font-size:9.00px;letter-spacing:-0.121px;color:#d4d4d4;">Flujo:</div>
<div class="a" style="left:521.0px;top:40.5px;width:31.0px;height:14.0px;background:#3f3f3f;border:1px solid #505050;border-radius:2px"></div>
<div class="a" style="left:552.0px;top:40.5px;width:10.0px;height:14.0px;background:#3f3f3f;border:1px solid #505050;border-radius:2px"></div>
<div class="t" style="left:523.70px;top:43.68px;font-size:9.00px;letter-spacing:-0.539px;color:#d4d4d4;">100%</div>
<svg class="a" style="left:554.0px;top:47.5px" width="6" height="4" viewBox="0 0 6 4"><path d="M.5 .5L3 3 5.500 .5" fill="none" stroke="#ccc" stroke-width="1.1"/></svg>
<svg class="a" style="left:572px;top:41px" width="17" height="15" viewBox="0 0 17 15"><path d="M6.500 2.500C2.500 3 .8 7 2.200 10.500c.6 1.500 2 2.300 3.300 2.500" fill="none" stroke="#ccc" stroke-width="1.300"/><path d="M15.800 1.800L7 9.800l2.300 1.500 1.200 2.700 1.500-2.300 2.800.3-2.300-2.200z" fill="none" stroke="#ddd" stroke-width="1.200"/></svg>
<div class="a" style="left:596.4px;top:39px;width:1px;height:19px;background:#3c3c3c"></div>
<div class="t" style="left:600.50px;top:43.68px;font-size:9.00px;letter-spacing:-0.076px;color:#d4d4d4;">Suavizar:</div>
<div class="a" style="left:641.0px;top:40.5px;width:30.5px;height:14.0px;background:#3f3f3f;border:1px solid #505050;border-radius:2px"></div>
<div class="a" style="left:671.5px;top:40.5px;width:11.5px;height:14.0px;background:#3f3f3f;border:1px solid #505050;border-radius:2px"></div>
<div class="t" style="left:643.80px;top:43.68px;font-size:9.00px;letter-spacing:-0.808px;color:#d4d4d4;">0%</div>
<svg class="a" style="left:674.5px;top:47.5px" width="6" height="4" viewBox="0 0 6 4"><path d="M.5 .5L3 3 5.500 .5" fill="none" stroke="#ccc" stroke-width="1.1"/></svg>
<svg class="a" style="left:692px;top:41.500px" width="13" height="13" viewBox="-6.500 -6.500 13 13"><g fill="#ddd"><circle r="4.300"/><rect x="-1.300" y="-6.200" width="2.600" height="3" transform="rotate(0)"/><rect x="-1.300" y="-6.200" width="2.600" height="3" transform="rotate(45)"/><rect x="-1.300" y="-6.200" width="2.600" height="3" transform="rotate(90)"/><rect x="-1.300" y="-6.200" width="2.600" height="3" transform="rotate(135)"/><rect x="-1.300" y="-6.200" width="2.600" height="3" transform="rotate(180)"/><rect x="-1.300" y="-6.200" width="2.600" height="3" transform="rotate(225)"/><rect x="-1.300" y="-6.200" width="2.600" height="3" transform="rotate(270)"/><rect x="-1.300" y="-6.200" width="2.600" height="3" transform="rotate(315)"/></g><circle r="1.800" fill="#4a4a4a"/></svg>
<div class="a" style="left:703.500px;top:54px;width:2px;height:2px;background:#ddd"></div>
<div class="a" style="left:713.3px;top:39px;width:1px;height:11px;background:#3c3c3c"></div>
<svg class="a" style="left:718.500px;top:43px" width="12" height="9" viewBox="0 0 12 9"><path d="M9 .6L.8 7.600H11.400" fill="none" stroke="#d0d0d0" stroke-width="1.200"/><path d="M6 4c1.300 1 1.800 2.300 1.800 3.600" fill="none" stroke="#d0d0d0" stroke-width="1"/></svg>
<div class="a" style="left:734.6px;top:41.5px;width:33.0px;height:13.0px;background:#3f3f3f;border:1px solid #505050;border-radius:2px"></div>
<div class="t" style="left:736.80px;top:43.68px;font-size:9.00px;letter-spacing:0.198px;color:#d4d4d4;">0°</div>
<div class="a" style="left:771.4px;top:36px;width:1px;height:17px;background:#3c3c3c"></div>
<svg class="a" style="left:781px;top:41px" width="15" height="15" viewBox="0 0 15 15"><path d="M9 3.200A5.500 5.500 0 1 0 12 8" fill="none" stroke="#ccc" stroke-width="1.200"/><path d="M7.500 6A2.600 2.600 0 1 0 9.300 8" fill="none" stroke="#ccc" stroke-width="1.100"/><path d="M14 .6c.6.500.4 1.100 0 1.600L7.500 9 6.500 8 13 1c.3-.3.700-.6 1-.4z" fill="#ddd"/></svg>
<svg class="a" style="left:807.500px;top:42px" width="15" height="14" viewBox="0 0 15 14"><g fill="none" stroke="#ccc" stroke-width="1.100"><path d="M6.300 4C4.500 1.500 2 .6 .8 1.300c.2 2.200.8 4 2.700 5C1.800 7.500 2 10.500 3.500 11.500c1.500-.3 2.500-1.800 2.800-3.300"/><path d="M8.700 4c1.800-2.500 4.300-3.400 5.500-2.700-.2 2.200-.8 4-2.700 5 1.700 1.200 1.500 4.200 0 5.200-1.500-.3-2.500-1.800-2.800-3.300"/><path d="M7.500 1v10.500" stroke-dasharray="1.500 1.200"/></g><rect x="12.500" y="12" width="2" height="2" fill="#ccc"/></svg>
<svg class="a" style="left:1582px;top:42.500px" width="13" height="13" viewBox="0 0 13 13"><circle cx="5.500" cy="5.500" r="4.500" fill="none" stroke="#ccc" stroke-width="1.200"/><path d="M8.800 8.800l3.500 3.500" stroke="#ccc" stroke-width="1.400"/></svg>
<svg class="a" style="left:1606.500px;top:43px" width="14" height="11" viewBox="0 0 14 11"><rect x=".6" y=".6" width="12.800" height="9.800" fill="none" stroke="#ccc" stroke-width="1.200"/><rect x=".6" y=".6" width="12.800" height="2.400" fill="#ccc"/><rect x=".6" y="3" width="3.400" height="7.400" fill="#999"/></svg>
<svg class="a" style="left:1628.0px;top:47.5px" width="6" height="4" viewBox="0 0 6 4"><path d="M.5 .5L3 3 5.500 .5" fill="none" stroke="#ccc" stroke-width="1.1"/></svg>
<svg class="a" style="left:1644px;top:41px" width="14" height="14" viewBox="0 0 14 14"><path d="M4 5H1v8.400h12V5h-3" fill="none" stroke="#ccc" stroke-width="1.300"/><path d="M7 9.500V1.500M4.300 3.800L7 1l2.700 2.800" fill="none" stroke="#ccc" stroke-width="1.300"/></svg>
<div class="a" style="left:66px;top:62px;width:30px;height:11px;background:#3a3a3a"></div>
<svg class="a" style="left:67px;top:64.500px" width="7" height="6" viewBox="0 0 7 6"><path d="M.5 .5L3 3 .5 5.500M3.700 .5L6.200 3 3.700 5.500" fill="none" stroke="#ccc" stroke-width="1"/></svg>

<svg class="a" style="left:102.500px;top:71.500px" width="6" height="6" viewBox="0 0 6 6"><path d="M.7 .7l4.600 4.600M5.300 .7L.7 5.300" stroke="#c8c8c8" stroke-width="1.300"/></svg>
<div class="t" style="left:116.00px;top:70.53px;font-size:9.30px;font-weight:bold;letter-spacing:0.314px;color:#eee;">Webinar_Monsters_01.psd al 175% (Capa 7, RGB/8) *</div>
<div class="a" style="left:97px;top:86px;width:15px;height:17px;background:#464646;border-right:1px dotted #5c5c5c;border-bottom:1px dotted #5c5c5c"></div>
<div class="a" style="left:183.6px;top:87px;width:1px;height:16px;background:#757575"></div>
<div class="t" style="left:185.40px;top:91.91px;font-size:10.50px;color:#a0a0a0;">3</div>
<div class="a" style="left:356.6px;top:87px;width:1px;height:16px;background:#757575"></div>
<div class="t" style="left:358.40px;top:91.91px;font-size:10.50px;color:#a0a0a0;">4</div>
<div class="a" style="left:529.6px;top:87px;width:1px;height:16px;background:#757575"></div>
<div class="t" style="left:531.40px;top:91.91px;font-size:10.50px;color:#a0a0a0;">5</div>
<div class="a" style="left:702.6px;top:87px;width:1px;height:16px;background:#757575"></div>
<div class="t" style="left:704.40px;top:91.91px;font-size:10.50px;color:#a0a0a0;">6</div>
<div class="a" style="left:875.6px;top:87px;width:1px;height:16px;background:#757575"></div>
<div class="t" style="left:877.40px;top:91.91px;font-size:10.50px;color:#a0a0a0;">7</div>
<div class="a" style="left:1048.6px;top:87px;width:1px;height:16px;background:#757575"></div>
<div class="t" style="left:1050.40px;top:91.91px;font-size:10.50px;color:#a0a0a0;">8</div>
<div class="a" style="left:1221.6px;top:87px;width:1px;height:16px;background:#757575"></div>
<div class="t" style="left:1223.40px;top:91.91px;font-size:10.50px;color:#a0a0a0;">9</div>
<div class="a" style="left:114.4px;top:101.0px;width:1px;height:2px;background:#6c6c6c"></div>
<div class="a" style="left:131.7px;top:101.0px;width:1px;height:2px;background:#6c6c6c"></div>
<div class="a" style="left:149.0px;top:101.0px;width:1px;height:2px;background:#6c6c6c"></div>
<div class="a" style="left:166.3px;top:101.0px;width:1px;height:2px;background:#6c6c6c"></div>
<div class="a" style="left:200.9px;top:101.0px;width:1px;height:2px;background:#6c6c6c"></div>
<div class="a" style="left:218.2px;top:101.0px;width:1px;height:2px;background:#6c6c6c"></div>
<div class="a" style="left:235.5px;top:101.0px;width:1px;height:2px;background:#6c6c6c"></div>
<div class="a" style="left:252.8px;top:101.0px;width:1px;height:2px;background:#6c6c6c"></div>
<div class="a" style="left:270.1px;top:99.0px;width:1px;height:4px;background:#6c6c6c"></div>
<div class="a" style="left:287.4px;top:101.0px;width:1px;height:2px;background:#6c6c6c"></div>
<div class="a" style="left:304.7px;top:101.0px;width:1px;height:2px;background:#6c6c6c"></div>
<div class="a" style="left:322.0px;top:101.0px;width:1px;height:2px;background:#6c6c6c"></div>
<div class="a" style="left:339.3px;top:101.0px;width:1px;height:2px;background:#6c6c6c"></div>
<div class="a" style="left:373.9px;top:101.0px;width:1px;height:2px;background:#6c6c6c"></div>
<div class="a" style="left:391.2px;top:101.0px;width:1px;height:2px;background:#6c6c6c"></div>
<div class="a" style="left:408.5px;top:101.0px;width:1px;height:2px;background:#6c6c6c"></div>
<div class="a" style="left:425.8px;top:101.0px;width:1px;height:2px;background:#6c6c6c"></div>
<div class="a" style="left:443.1px;top:99.0px;width:1px;height:4px;background:#6c6c6c"></div>
<div class="a" style="left:460.4px;top:101.0px;width:1px;height:2px;background:#6c6c6c"></div>
<div class="a" style="left:477.7px;top:101.0px;width:1px;height:2px;background:#6c6c6c"></div>
<div class="a" style="left:495.0px;top:101.0px;width:1px;height:2px;background:#6c6c6c"></div>
<div class="a" style="left:512.3px;top:101.0px;width:1px;height:2px;background:#6c6c6c"></div>
<div class="a" style="left:546.9px;top:101.0px;width:1px;height:2px;background:#6c6c6c"></div>
<div class="a" style="left:564.2px;top:101.0px;width:1px;height:2px;background:#6c6c6c"></div>
<div class="a" style="left:581.5px;top:101.0px;width:1px;height:2px;background:#6c6c6c"></div>
<div class="a" style="left:598.8px;top:101.0px;width:1px;height:2px;background:#6c6c6c"></div>
<div class="a" style="left:616.1px;top:99.0px;width:1px;height:4px;background:#6c6c6c"></div>
<div class="a" style="left:633.4px;top:101.0px;width:1px;height:2px;background:#6c6c6c"></div>
<div class="a" style="left:650.7px;top:101.0px;width:1px;height:2px;background:#6c6c6c"></div>
<div class="a" style="left:668.0px;top:101.0px;width:1px;height:2px;background:#6c6c6c"></div>
<div class="a" style="left:685.3px;top:101.0px;width:1px;height:2px;background:#6c6c6c"></div>
<div class="a" style="left:719.9px;top:101.0px;width:1px;height:2px;background:#6c6c6c"></div>
<div class="a" style="left:737.2px;top:101.0px;width:1px;height:2px;background:#6c6c6c"></div>
<div class="a" style="left:754.5px;top:101.0px;width:1px;height:2px;background:#6c6c6c"></div>
<div class="a" style="left:771.8px;top:101.0px;width:1px;height:2px;background:#6c6c6c"></div>
<div class="a" style="left:789.1px;top:99.0px;width:1px;height:4px;background:#6c6c6c"></div>
<div class="a" style="left:806.4px;top:101.0px;width:1px;height:2px;background:#6c6c6c"></div>
<div class="a" style="left:823.7px;top:101.0px;width:1px;height:2px;background:#6c6c6c"></div>
<div class="a" style="left:841.0px;top:101.0px;width:1px;height:2px;background:#6c6c6c"></div>
<div class="a" style="left:858.3px;top:101.0px;width:1px;height:2px;background:#6c6c6c"></div>
<div class="a" style="left:892.9px;top:101.0px;width:1px;height:2px;background:#6c6c6c"></div>
<div class="a" style="left:910.2px;top:101.0px;width:1px;height:2px;background:#6c6c6c"></div>
<div class="a" style="left:927.5px;top:101.0px;width:1px;height:2px;background:#6c6c6c"></div>
<div class="a" style="left:944.8px;top:101.0px;width:1px;height:2px;background:#6c6c6c"></div>
<div class="a" style="left:962.1px;top:99.0px;width:1px;height:4px;background:#6c6c6c"></div>
<div class="a" style="left:979.4px;top:101.0px;width:1px;height:2px;background:#6c6c6c"></div>
<div class="a" style="left:996.7px;top:101.0px;width:1px;height:2px;background:#6c6c6c"></div>
<div class="a" style="left:1014.0px;top:101.0px;width:1px;height:2px;background:#6c6c6c"></div>
<div class="a" style="left:1031.3px;top:101.0px;width:1px;height:2px;background:#6c6c6c"></div>
<div class="a" style="left:1065.9px;top:101.0px;width:1px;height:2px;background:#6c6c6c"></div>
<div class="a" style="left:1083.2px;top:101.0px;width:1px;height:2px;background:#6c6c6c"></div>
<div class="a" style="left:1100.5px;top:101.0px;width:1px;height:2px;background:#6c6c6c"></div>
<div class="a" style="left:1117.8px;top:101.0px;width:1px;height:2px;background:#6c6c6c"></div>
<div class="a" style="left:1135.1px;top:99.0px;width:1px;height:4px;background:#6c6c6c"></div>
<div class="a" style="left:1152.4px;top:101.0px;width:1px;height:2px;background:#6c6c6c"></div>
<div class="a" style="left:1169.7px;top:101.0px;width:1px;height:2px;background:#6c6c6c"></div>
<div class="a" style="left:1187.0px;top:101.0px;width:1px;height:2px;background:#6c6c6c"></div>
<div class="a" style="left:1204.3px;top:101.0px;width:1px;height:2px;background:#6c6c6c"></div>
<div class="a" style="left:1238.9px;top:101.0px;width:1px;height:2px;background:#6c6c6c"></div>
<div class="a" style="left:1256.2px;top:101.0px;width:1px;height:2px;background:#6c6c6c"></div>
<div class="a" style="left:1273.5px;top:101.0px;width:1px;height:2px;background:#6c6c6c"></div>
<div class="a" style="left:1290.8px;top:101.0px;width:1px;height:2px;background:#6c6c6c"></div>
<div class="a" style="left:1308.1px;top:99.0px;width:1px;height:4px;background:#6c6c6c"></div>
<div class="a" style="left:1325.4px;top:101.0px;width:1px;height:2px;background:#6c6c6c"></div>
<div class="a" style="left:1342.7px;top:101.0px;width:1px;height:2px;background:#6c6c6c"></div>
<div class="a" style="left:1360.0px;top:101.0px;width:1px;height:2px;background:#6c6c6c"></div>
<div class="a" style="left:628px;top:88px;width:1px;height:8px;background:#ccc"></div>
<div class="a" style="left:111px;top:103px;width:1px;height:727px;background:#3a3a3a"></div>
<div class="a" style="left:97px;top:106.0px;width:15px;height:1px;background:#5a5a5a"></div>
<div class="t" style="left:97.90px;top:108.91px;font-size:10.50px;color:#a0a0a0;">3</div>
<div class="a" style="left:97px;top:279.0px;width:15px;height:1px;background:#5a5a5a"></div>
<div class="t" style="left:97.90px;top:281.91px;font-size:10.50px;color:#a0a0a0;">4</div>
<div class="a" style="left:97px;top:452.0px;width:15px;height:1px;background:#5a5a5a"></div>
<div class="t" style="left:97.90px;top:454.91px;font-size:10.50px;color:#a0a0a0;">5</div>
<div class="a" style="left:97px;top:625.0px;width:15px;height:1px;background:#5a5a5a"></div>
<div class="t" style="left:97.90px;top:627.91px;font-size:10.50px;color:#a0a0a0;">6</div>
<div class="a" style="left:97px;top:798.0px;width:15px;height:1px;background:#5a5a5a"></div>
<div class="t" style="left:97.90px;top:800.91px;font-size:10.50px;color:#a0a0a0;">7</div>
<div class="a" style="left:109px;top:123.3px;width:2px;height:1px;background:#6c6c6c"></div>
<div class="a" style="left:109px;top:140.6px;width:2px;height:1px;background:#6c6c6c"></div>
<div class="a" style="left:109px;top:157.9px;width:2px;height:1px;background:#6c6c6c"></div>
<div class="a" style="left:109px;top:175.2px;width:2px;height:1px;background:#6c6c6c"></div>
<div class="a" style="left:107px;top:192.5px;width:4px;height:1px;background:#6c6c6c"></div>
<div class="a" style="left:109px;top:209.8px;width:2px;height:1px;background:#6c6c6c"></div>
<div class="a" style="left:109px;top:227.1px;width:2px;height:1px;background:#6c6c6c"></div>
<div class="a" style="left:109px;top:244.4px;width:2px;height:1px;background:#6c6c6c"></div>
<div class="a" style="left:109px;top:261.7px;width:2px;height:1px;background:#6c6c6c"></div>
<div class="a" style="left:109px;top:296.3px;width:2px;height:1px;background:#6c6c6c"></div>
<div class="a" style="left:109px;top:313.6px;width:2px;height:1px;background:#6c6c6c"></div>
<div class="a" style="left:109px;top:330.9px;width:2px;height:1px;background:#6c6c6c"></div>
<div class="a" style="left:109px;top:348.2px;width:2px;height:1px;background:#6c6c6c"></div>
<div class="a" style="left:107px;top:365.5px;width:4px;height:1px;background:#6c6c6c"></div>
<div class="a" style="left:109px;top:382.8px;width:2px;height:1px;background:#6c6c6c"></div>
<div class="a" style="left:109px;top:400.1px;width:2px;height:1px;background:#6c6c6c"></div>
<div class="a" style="left:109px;top:417.4px;width:2px;height:1px;background:#6c6c6c"></div>
<div class="a" style="left:109px;top:434.7px;width:2px;height:1px;background:#6c6c6c"></div>
<div class="a" style="left:109px;top:469.3px;width:2px;height:1px;background:#6c6c6c"></div>
<div class="a" style="left:109px;top:486.6px;width:2px;height:1px;background:#6c6c6c"></div>
<div class="a" style="left:109px;top:503.9px;width:2px;height:1px;background:#6c6c6c"></div>
<div class="a" style="left:109px;top:521.2px;width:2px;height:1px;background:#6c6c6c"></div>
<div class="a" style="left:107px;top:538.5px;width:4px;height:1px;background:#6c6c6c"></div>
<div class="a" style="left:109px;top:555.8px;width:2px;height:1px;background:#6c6c6c"></div>
<div class="a" style="left:109px;top:573.1px;width:2px;height:1px;background:#6c6c6c"></div>
<div class="a" style="left:109px;top:590.4px;width:2px;height:1px;background:#6c6c6c"></div>
<div class="a" style="left:109px;top:607.7px;width:2px;height:1px;background:#6c6c6c"></div>
<div class="a" style="left:109px;top:642.3px;width:2px;height:1px;background:#6c6c6c"></div>
<div class="a" style="left:109px;top:659.6px;width:2px;height:1px;background:#6c6c6c"></div>
<div class="a" style="left:109px;top:676.9px;width:2px;height:1px;background:#6c6c6c"></div>
<div class="a" style="left:109px;top:694.2px;width:2px;height:1px;background:#6c6c6c"></div>
<div class="a" style="left:107px;top:711.5px;width:4px;height:1px;background:#6c6c6c"></div>
<div class="a" style="left:109px;top:728.8px;width:2px;height:1px;background:#6c6c6c"></div>
<div class="a" style="left:109px;top:746.1px;width:2px;height:1px;background:#6c6c6c"></div>
<div class="a" style="left:109px;top:763.4px;width:2px;height:1px;background:#6c6c6c"></div>
<div class="a" style="left:109px;top:780.7px;width:2px;height:1px;background:#6c6c6c"></div>
<div class="a" style="left:109px;top:815.3px;width:2px;height:1px;background:#6c6c6c"></div>
<div class="a" style="left:98px;top:757px;width:9px;height:1px;background:#ccc"></div>
<div class="a" style="left:97px;top:828px;width:1289px;height:2px;background:#454545"></div>
<div class="a" style="left:1373px;top:131px;width:8px;height:87px;background:#606060;border-radius:4px"></div>
<!-- tools -->
<div class="a" style="left:66px;top:73px;width:28px;height:757px;background:#4a4a4a"></div>
<div class="a" style="left:94px;top:73px;width:3px;height:757px;background:#3a3a3a"></div>
<div class="a" style="left:70px;top:76px;width:16px;height:3px;background:repeating-linear-gradient(90deg,#3c3c3c 0 1px,#4a4a4a 1px 2px)"></div>
<svg class="a" style="left:70.2px;top:89.2px" width="16.5" height="16.5" viewBox="-9 -9 18 18"><g transform="scale(.86)"><g fill="none" stroke="#d8d8d8" stroke-width="1.300"><path d="M0 -7.500V7.500M-7.500 0H7.500"/></g><g fill="#d8d8d8"><path d="M0 -8.500l2.600 3h-5.200zM0 8.500l2.600 -3h-5.200zM-8.500 0l3 -2.600v5.200zM8.500 0l-3 -2.600v5.200z"/></g></g></svg><svg class="a" style="left:86.300px;top:102.2px" width="3" height="3" viewBox="0 0 3 3"><path d="M3 0V3H0z" fill="#bbb"/></svg>
<svg class="a" style="left:70.2px;top:110.5px" width="16.5" height="16.5" viewBox="-9 -9 18 18"><rect x="-6.500" y="-5" width="13" height="10" fill="none" stroke="#d8d8d8" stroke-width="1.300" stroke-dasharray="2.600 1.500"/></svg><svg class="a" style="left:86.300px;top:123.4px" width="3" height="3" viewBox="0 0 3 3"><path d="M3 0V3H0z" fill="#bbb"/></svg>
<svg class="a" style="left:70.2px;top:132.2px" width="16.5" height="16.5" viewBox="-9 -9 18 18"><g fill="none" stroke="#d8d8d8" stroke-width="1.300"><ellipse cx="1" cy="-2.500" rx="6.800" ry="4" transform="rotate(-14)"/><path d="M-3.500 .5c-1.500 1-1.500 3 .2 3 1.500 0 1.300-2-.2-2.200M-3 3.500c-.2 1.500-.6 2.300-1.300 3"/></g></svg><svg class="a" style="left:86.300px;top:145.1px" width="3" height="3" viewBox="0 0 3 3"><path d="M3 0V3H0z" fill="#bbb"/></svg>
<svg class="a" style="left:70.2px;top:153.8px" width="16.5" height="16.5" viewBox="-9 -9 18 18"><path d="M-7.500 5.500L1.800 -3.800 4.800 -.8 -4.500 8.500z" fill="#d8d8d8"/><g stroke="#d8d8d8" stroke-width="1.100"><path d="M5 -7.500v2.500M3.700 -6.200h2.600M7.500 -3v2M6.500 -2h2M1 -6.500v1.600M.2 -5.700h1.600M6.500 2v1.600"/></g></svg><svg class="a" style="left:86.300px;top:166.7px" width="3" height="3" viewBox="0 0 3 3"><path d="M3 0V3H0z" fill="#bbb"/></svg>
<svg class="a" style="left:70.2px;top:175.4px" width="16.5" height="16.5" viewBox="-9 -9 18 18"><g fill="none" stroke="#d8d8d8" stroke-width="1.400"><path d="M-4 -8V4H8M-8 -4H4V8"/></g></svg><svg class="a" style="left:86.300px;top:188.4px" width="3" height="3" viewBox="0 0 3 3"><path d="M3 0V3H0z" fill="#bbb"/></svg>
<svg class="a" style="left:70.2px;top:197.2px" width="16.5" height="16.5" viewBox="-9 -9 18 18"><g fill="none" stroke="#d8d8d8" stroke-width="1.300"><rect x="-6.500" y="-5.500" width="13" height="11"/><path d="M-6.500 -5.500L6.500 5.500M6.500 -5.500L-6.500 5.500"/></g></svg>
<svg class="a" style="left:70.2px;top:218.8px" width="16.5" height="16.5" viewBox="-9 -9 18 18"><path d="M-7.500 7.500l.8-3.300 6.500-6.500 2.500 2.500-6.500 6.500z" fill="none" stroke="#d8d8d8" stroke-width="1.300"/><path d="M.5 -4.500l1.500-1.500c.5-.5.500-.5 1 0 1.500-3 5-2.500 4.500.5-.3 1.700-2 2-2.800 2.200.5.500.5.500 0 1L3.200 -.8z" fill="#d8d8d8"/></svg><svg class="a" style="left:86.300px;top:231.7px" width="3" height="3" viewBox="0 0 3 3"><path d="M3 0V3H0z" fill="#bbb"/></svg>
<svg class="a" style="left:70.2px;top:240.4px" width="16.5" height="16.5" viewBox="-9 -9 18 18"><g transform="rotate(-45)"><rect x="-8" y="-3.700" width="16" height="7.400" rx="1.500" fill="#d8d8d8"/><rect x="-2.600" y="-2.600" width="5.200" height="5.200" fill="#4a4a4a"/><g fill="#d8d8d8"><rect x="-1.900" y="-1.900" width="1.500" height="1.500"/><rect x=".4" y="-1.900" width="1.500" height="1.500"/><rect x="-1.900" y=".4" width="1.500" height="1.500"/><rect x=".4" y=".4" width="1.500" height="1.500"/></g></g><path d="M-7.500 -1c-.5-3 1-5.500 4-6" fill="none" stroke="#d8d8d8" stroke-width="1" stroke-dasharray="1.500 1.200"/></svg><svg class="a" style="left:86.300px;top:253.4px" width="3" height="3" viewBox="0 0 3 3"><path d="M3 0V3H0z" fill="#bbb"/></svg>
<div class="a" style="left:66px;top:261px;width:25px;height:20px;background:#2d2d2d"></div>
<svg class="a" style="left:70.2px;top:262.6px" width="16.5" height="16.5" viewBox="-9 -9 18 18"><path d="M7.800 -8c.6.500.5 1.200 0 1.800L0 2.500 -2 .6 6.200 -7.600c.5-.5 1.100-.8 1.600-.4z" fill="#eee"/><path d="M-3 1.500c1.400.2 2.300 1.200 2.200 2.500-.6 2.700-4 3.800-7.200 3.200 2-.9 1.900-2.300 2.300-3.800.4-1.200 1.500-2 2.700-1.900z" fill="#eee"/></svg><svg class="a" style="left:86.300px;top:275.6px" width="3" height="3" viewBox="0 0 3 3"><path d="M3 0V3H0z" fill="#bbb"/></svg>
<svg class="a" style="left:70.2px;top:286.1px" width="16.5" height="16.5" viewBox="-9 -9 18 18"><path d="M-2.300 -5.500a2.500 2.500 0 1 1 4.600 0c-.6 1.500-.8 2.500-.5 4h4.200v3.500h-12v-3.500h4.200c.3-1.500.1-2.500-.5-4z" fill="#d8d8d8"/><rect x="-6" y="3.500" width="12" height="1.800" fill="#d8d8d8"/></svg><svg class="a" style="left:86.300px;top:299.0px" width="3" height="3" viewBox="0 0 3 3"><path d="M3 0V3H0z" fill="#bbb"/></svg>
<svg class="a" style="left:70.2px;top:305.8px" width="16.5" height="16.5" viewBox="-9 -9 18 18"><path d="M7.800 -8c.6.500.5 1.200 0 1.800L1.500 1.500 -.5 -.4 6.200 -7.600c.5-.5 1.100-.8 1.600-.4z" fill="#d8d8d8"/><path d="M-1.500 .5c1.400.2 2.300 1.200 2.200 2.500-.6 2.700-3.500 3.800-6.700 3.200 2-.9 1.600-2.300 2-3.800.4-1.200 1.300-2 2.500-1.900z" fill="#d8d8d8"/><path d="M-7.500 -3.500c1.500-2.500 4-3.500 6.500-2.800" fill="none" stroke="#d8d8d8" stroke-width="1.300"/><path d="M-8.800 -5.500l.5 3.500 3.200-1.300z" fill="#d8d8d8"/><path d="M3 3.500c1 1.500.5 3.500-.5 4.500" fill="none" stroke="#d8d8d8" stroke-width="1" stroke-dasharray="1.200 1"/></svg><svg class="a" style="left:86.300px;top:318.7px" width="3" height="3" viewBox="0 0 3 3"><path d="M3 0V3H0z" fill="#bbb"/></svg>
<svg class="a" style="left:70.2px;top:327.8px" width="16.5" height="16.5" viewBox="-9 -9 18 18"><path d="M-7 2.500L1.500 -6l6 4.200L1 5.500H-4z" fill="none" stroke="#d8d8d8" stroke-width="1.300"/><path d="M-2.500 -2L1.500 -6l6 4.200-3.800 4.500z" fill="#d8d8d8"/><path d="M-4 5.700H8" stroke="#d8d8d8" stroke-width="1.200"/></svg><svg class="a" style="left:86.300px;top:340.7px" width="3" height="3" viewBox="0 0 3 3"><path d="M3 0V3H0z" fill="#bbb"/></svg>
<svg class="a" style="left:70.2px;top:349.2px" width="16.5" height="16.5" viewBox="-9 -9 18 18"><defs><linearGradient id="tg"><stop offset="0" stop-color="#333"/><stop offset="1" stop-color="#ddd"/></linearGradient></defs><rect x="-6.800" y="-5.300" width="13.600" height="10.600" fill="url(#tg)" stroke="#d8d8d8" stroke-width="1.300"/></svg><svg class="a" style="left:86.300px;top:362.2px" width="3" height="3" viewBox="0 0 3 3"><path d="M3 0V3H0z" fill="#bbb"/></svg>
<svg class="a" style="left:70.2px;top:370.8px" width="16.5" height="16.5" viewBox="-9 -9 18 18"><path d="M0 -7c2 3 4.500 5.500 4.500 8.500a4.500 4.500 0 0 1-9 0c0-3 2.500-5.500 4.500-8.500z" fill="#d8d8d8"/></svg><svg class="a" style="left:86.300px;top:383.7px" width="3" height="3" viewBox="0 0 3 3"><path d="M3 0V3H0z" fill="#bbb"/></svg>
<svg class="a" style="left:70.2px;top:392.8px" width="16.5" height="16.5" viewBox="-9 -9 18 18"><circle cx="2" cy="-2.500" r="4.300" fill="#d8d8d8"/><path d="M-1 .8L-7.500 7.500" stroke="#d8d8d8" stroke-width="1.800"/></svg><svg class="a" style="left:86.300px;top:405.7px" width="3" height="3" viewBox="0 0 3 3"><path d="M3 0V3H0z" fill="#bbb"/></svg>
<svg class="a" style="left:70.2px;top:414.2px" width="16.5" height="16.5" viewBox="-9 -9 18 18"><g transform="rotate(45)"><path d="M0 -8.500c2.500 2.500 4 5.500 4 8.500l-1.500 3h-5l-1.500-3c0-3 1.500-6 4-8.500z" fill="none" stroke="#d8d8d8" stroke-width="1.300"/><path d="M0 -7.500V-1" stroke="#d8d8d8" stroke-width="1"/><circle cx="0" cy="0" r="1.300" fill="#d8d8d8"/><rect x="-3" y="4.200" width="6" height="2.500" fill="#d8d8d8"/></g></svg><svg class="a" style="left:86.300px;top:427.2px" width="3" height="3" viewBox="0 0 3 3"><path d="M3 0V3H0z" fill="#bbb"/></svg>
<svg class="a" style="left:70.2px;top:436.1px" width="16.5" height="16.5" viewBox="-9 -9 18 18"><path d="M-6.500 -7.500h13v3.500h-1.200l-.5-1.800H1.300V5.500l2 .5v1.300h-6.600V6l2-.5V-5.800h-3.500l-.5 1.800h-1.200z" fill="#d8d8d8"/></svg><svg class="a" style="left:86.300px;top:449.1px" width="3" height="3" viewBox="0 0 3 3"><path d="M3 0V3H0z" fill="#bbb"/></svg>
<svg class="a" style="left:70.2px;top:458.4px" width="16.5" height="16.5" viewBox="-9 -9 18 18"><path d="M-4 -8V6l3.200-3 2.300 5.300 2.300-1-2.300-5.200H6z" fill="#eee" stroke="#222" stroke-width=".8"/></svg><svg class="a" style="left:86.300px;top:471.3px" width="3" height="3" viewBox="0 0 3 3"><path d="M3 0V3H0z" fill="#bbb"/></svg>
<svg class="a" style="left:70.2px;top:479.8px" width="16.5" height="16.5" viewBox="-9 -9 18 18"><ellipse cx="0" cy="0" rx="7" ry="5.300" fill="#7a7a7a" stroke="#d8d8d8" stroke-width="1.300"/></svg><svg class="a" style="left:86.300px;top:492.7px" width="3" height="3" viewBox="0 0 3 3"><path d="M3 0V3H0z" fill="#bbb"/></svg>
<svg class="a" style="left:70.2px;top:501.8px" width="16.5" height="16.5" viewBox="-9 -9 18 18"><path d="M-4 1V-3.500c0-1.300 1.700-1.300 1.700 0V-5c0-1.300 1.800-1.300 1.800 0v-.5c0-1.300 1.800-1.300 1.800 0v1c0-1.200 1.700-1.200 1.700 0V3c0 3-1.500 5-4.500 5s-3.500-1.500-5-4l-1.500-2.500c-.5-1 .8-1.800 1.600-.8z" fill="#d8d8d8"/><path d="M-1 -7.500c3-1.500 6.500 0 7.500 3" fill="none" stroke="#d8d8d8" stroke-width="1.400"/><path d="M8 -3l-2.800 .2 1.500-2.700z" fill="#d8d8d8"/></svg><svg class="a" style="left:86.300px;top:514.7px" width="3" height="3" viewBox="0 0 3 3"><path d="M3 0V3H0z" fill="#bbb"/></svg>
<svg class="a" style="left:70.2px;top:523.4px" width="16.5" height="16.5" viewBox="-9 -9 18 18"><circle cx="-1.500" cy="-2" r="5" fill="none" stroke="#d8d8d8" stroke-width="1.500"/><path d="M2 1.800L7 7" stroke="#d8d8d8" stroke-width="2"/><path d="M-4 -3c.3-1.500 1.500-2.300 2.800-2.400" fill="none" stroke="#d8d8d8" stroke-width="1"/></svg>
<svg class="a" style="left:70.2px;top:545.5px" width="16.5" height="16.5" viewBox="-9 -9 18 18"><g fill="#d8d8d8"><circle cx="-5" cy="0" r="1.400"/><circle cx="0" cy="0" r="1.400"/><circle cx="5" cy="0" r="1.400"/></g></svg><svg class="a" style="left:86.300px;top:558.4px" width="3" height="3" viewBox="0 0 3 3"><path d="M3 0V3H0z" fill="#bbb"/></svg>
<div class="a" style="left:69.500px;top:572.500px;width:5px;height:5px;background:#fff;border:1px solid #222"></div><div class="a" style="left:66.500px;top:569.500px;width:5px;height:5px;background:#111;border:1px solid #ddd"></div>
<svg class="a" style="left:80px;top:568.500px" width="10" height="10" viewBox="0 0 10 10"><path d="M2.500 4V2h4.500M5 7.500h2.500V5" fill="none" stroke="#ddd" stroke-width="1.100"/><path d="M.8 3.800h3.400L2.500 6zM5.800 .3v3.400L3.800 2zM5.700 5.800H9.300L7.500 3.800z" fill="#ddd"/></svg>
<div class="a" style="left:74px;top:591px;width:16px;height:16px;background:#fff;border:1px solid #bbb"></div>
<div class="a" style="left:66px;top:583px;width:15.500px;height:15.500px;background:#000;border:1px solid #ddd;box-shadow:0 0 0 1px #444"></div>
<svg class="a" style="left:70.2px;top:613.4px" width="16.5" height="16.5" viewBox="-9 -9 18 18"><rect x="-6.500" y="-5" width="13" height="10" fill="none" stroke="#d8d8d8" stroke-width="1.200"/><circle r="3" fill="none" stroke="#d8d8d8" stroke-width="1" stroke-dasharray="1.300 1"/></svg>
<svg class="a" style="left:70.2px;top:635.0px" width="16.5" height="16.5" viewBox="-9 -9 18 18"><rect x="-3" y="-5.500" width="10" height="7" fill="none" stroke="#d8d8d8" stroke-width="1.200"/><rect x="-7" y="-2" width="10" height="7" fill="#4a4a4a" stroke="#d8d8d8" stroke-width="1.200"/></svg><svg class="a" style="left:86.300px;top:648.0px" width="3" height="3" viewBox="0 0 3 3"><path d="M3 0V3H0z" fill="#bbb"/></svg>
<!-- panels -->
<div class="a" style="left:1386px;top:62px;width:276px;height:11px;background:#3c3c3c"></div>
<svg class="a" style="left:1405.500px;top:65px" width="7" height="6" viewBox="0 0 7 6"><path d="M3 .5L.5 3 3 5.500M6.200 .5L3.700 3 6.200 5.500" fill="none" stroke="#ccc" stroke-width="1"/></svg>
<div class="a" style="left:1386px;top:73px;width:31.500px;height:757px;background:#4a4a4a"></div>
<div class="a" style="left:1417.500px;top:73px;width:2.500px;height:757px;background:#3a3a3a"></div>
<div class="a" style="left:1386px;top:106.0px;width:31.500px;height:1.500px;background:#3a3a3a"></div>
<div class="a" style="left:1386px;top:164.0px;width:31.500px;height:1.500px;background:#3a3a3a"></div>
<div class="a" style="left:1386px;top:222.0px;width:31.500px;height:1.500px;background:#3a3a3a"></div>
<div class="a" style="left:1386px;top:279.5px;width:31.500px;height:1.500px;background:#3a3a3a"></div>
<div class="a" style="left:1386px;top:314.5px;width:31.500px;height:1.500px;background:#3a3a3a"></div>
<div class="a" style="left:1395px;top:77.0px;width:14px;height:3px;background:repeating-linear-gradient(90deg,#404040 0 1px,#505050 1px 2px)"></div>
<div class="a" style="left:1395px;top:110.0px;width:14px;height:3px;background:repeating-linear-gradient(90deg,#404040 0 1px,#505050 1px 2px)"></div>
<div class="a" style="left:1395px;top:168.0px;width:14px;height:3px;background:repeating-linear-gradient(90deg,#404040 0 1px,#505050 1px 2px)"></div>
<div class="a" style="left:1395px;top:226.0px;width:14px;height:3px;background:repeating-linear-gradient(90deg,#404040 0 1px,#505050 1px 2px)"></div>
<div class="a" style="left:1395px;top:283.5px;width:14px;height:3px;background:repeating-linear-gradient(90deg,#404040 0 1px,#505050 1px 2px)"></div>
<svg class="a" style="left:1393.0px;top:82.3px" width="18" height="18" viewBox="-9 -9 18 18"><g fill="none" stroke="#d6d6d6" stroke-width="1"><rect x="-6" y="-6.500" width="3" height="3"/><rect x="-6" y="-2" width="3" height="3"/></g><rect x="-6.500" y="2.500" width="4" height="4" fill="#d6d6d6"/><path d="M1 -5c3.500 0 5 2.500 5 5s-1.500 4.500-3.500 6" fill="none" stroke="#d6d6d6" stroke-width="1.400"/><path d="M-.5 -5l3-2.600v5.200z" fill="#d6d6d6"/></svg>
<svg class="a" style="left:1393.0px;top:116.8px" width="18" height="18" viewBox="-9 -9 18 18"><path d="M7.800 -5c.6.500.5 1.200 0 1.800L1.500 3 -.5 1.100 6.200 -4.600c.5-.5 1.100-.8 1.600-.4z" fill="#d6d6d6"/><path d="M-1.500 2c1.400.2 2.300 1.200 2.200 2.500-.6 2.200-3.500 3-6.200 2.500 1.500-.8 1.300-2 1.700-3.200.4-1.200 1.100-1.900 2.300-1.800z" fill="#d6d6d6"/><g stroke="#d6d6d6" stroke-width="1"><path d="M-8.500 -7.500h5M-8.500 -5h5M-8.500 -2.500h5"/></g></svg>
<svg class="a" style="left:1393.0px;top:140.3px" width="18" height="18" viewBox="-9 -9 18 18"><g fill="#d6d6d6"><path d="M-8.500 -4c0-1.800 3-2.500 4.500-1.200h10v1.600h-10c-1.500 1.600-4.500 1.200-4.500-.4z"/><path d="M8.500 -1.500v8c-2.500-.3-4.500-1.500-5-3.300h-9.500v-1.600H3.500C4 0 6-1.200 8.500 -1.500z"/></g></svg>
<div class="t" style="left:1394.50px;top:175.61px;font-size:17.00px;color:#d6d6d6;">A</div>
<div class="a" style="left:1407.500px;top:176px;width:1.200px;height:16px;background:#d6d6d6"></div>
<svg class="a" style="left:1393.0px;top:197.4px" width="18" height="18" viewBox="-9 -9 18 18"><path d="M-1 -6.500h6.500v1.500h-1.500v12h-1.500v-12h-1.500v12h-1.500v-6.200a3.700 3.700 0 0 1 0-7.300z" fill="#d6d6d6"/></svg>
<svg class="a" style="left:1393.0px;top:232.0px" width="18" height="18" viewBox="-9 -9 18 18"><g fill="none" stroke="#d6d6d6" stroke-width="1"><path d="M-6.500 -3.500l3.500-2 3.500 2v4l-3.500 2-3.500-2zM-6.500 -3.500l3.500 2 3.500-2M-3 -1.500v4"/></g><g fill="#d6d6d6"><rect x="2.500" y="-6" width="3.500" height="3"/><rect x="2.500" y="-1.500" width="3.500" height="3"/><rect x="-7" y="4" width="13" height="3"/></g></svg>
<svg class="a" style="left:1393.0px;top:256.0px" width="18" height="18" viewBox="-9 -9 18 18"><circle r="6" fill="none" stroke="#d6d6d6" stroke-width="1.300"/><path d="M-4.300 4.300A6 6 0 0 1 4.300 -4.300z" fill="#d6d6d6"/></svg>
<svg class="a" style="left:1393.0px;top:290.0px" width="18" height="18" viewBox="-9 -9 18 18"><g fill="none" stroke="#d6d6d6" stroke-width="1.100"><path d="M-5 -5.500H5M-5 6c0-5 2-10 5-11.500 3 1.500 5 6.500 5 11.500"/><rect x="-1.500" y="-7" width="3" height="3" fill="#4a4a4a"/><rect x="-8" y="-7" width="3" height="3"/><rect x="5" y="-7" width="3" height="3"/><rect x="-6.500" y="5" width="3" height="3"/><rect x="3.500" y="5" width="3" height="3"/></g></svg>
<div class="a" style="left:1420px;top:73px;width:242px;height:382px;background:#4a4a4a"></div>
<div class="a" style="left:1458px;top:73px;width:204px;height:23px;background:#3e3e3e;border-left:1px solid #353535"></div>
<div class="a" style="left:1420px;top:456.300px;width:242px;height:3px;background:#3a3a3a"></div>
<div class="t" style="left:1426.50px;top:79.43px;font-size:9.30px;font-weight:bold;letter-spacing:-0.070px;color:#f0f0f0;">Color</div>
<div class="t" style="left:1465.20px;top:79.68px;font-size:9.00px;font-weight:bold;letter-spacing:-0.030px;color:#a9a9a9;">Muestras</div>
<div class="a" style="left:1436.500px;top:113.500px;width:15px;height:15.500px;background:#fff"></div>
<div class="a" style="left:1426.500px;top:104.500px;width:18px;height:17px;background:#000;border:1px solid #ccc;box-shadow:0 0 0 1px #555,inset 0 0 0 1px #333"></div>
<div class="t" style="left:1457.30px;top:105.88px;font-size:9.00px;font-weight:bold;color:#c4c4c4;">H</div>
<div class="t" style="left:1457.30px;top:123.88px;font-size:9.00px;font-weight:bold;color:#c4c4c4;">S</div>
<div class="t" style="left:1457.30px;top:142.68px;font-size:9.00px;font-weight:bold;color:#c4c4c4;">B</div>
<div class="a" style="left:1468.500px;top:103px;width:150px;height:5px;background:linear-gradient(90deg,#d8101a 0,#d8101a 4px,#ff3540 4.500px,#ff3540 10px,#f58420 10.500px,#f58420 15px,#f5b030 15.500px,#f5b030 18.500px,#ffe020 19px,#ffe020 24px,#a0f020 24.500px,#a0f020 28px,#00f000 28.500px,#00f000 60px,#10f0f0 90px,#1010f0 120px,#f010f0 150px)"></div>
<div class="a" style="left:1468.500px;top:122px;width:150px;height:4.500px;background:#000"></div>
<div class="a" style="left:1468.500px;top:140px;width:150px;height:4.500px;background:linear-gradient(90deg,#1e1e1e 0,#1e1e1e 10px,#1a1819 11px,#1a1819 23px,#262425 24px,#2c2a2b 33px,rgba(60,60,60,0) 38px)"></div>
<svg class="a" style="left:1465px;top:109.5px" width="9" height="8" viewBox="0 0 9 8"><path d="M4.500 0L8.500 4.500V6.500Q8.500 8 7 8H2Q.5 8 .5 6.500V4.500z" fill="#f2f2f2"/></svg>
<svg class="a" style="left:1465px;top:128.0px" width="9" height="8" viewBox="0 0 9 8"><path d="M4.500 0L8.500 4.500V6.500Q8.500 8 7 8H2Q.5 8 .5 6.500V4.500z" fill="#f2f2f2"/></svg>
<svg class="a" style="left:1465px;top:146.8px" width="9" height="8" viewBox="0 0 9 8"><path d="M4.500 0L8.500 4.500V6.500Q8.500 8 7 8H2Q.5 8 .5 6.500V4.500z" fill="#f2f2f2"/></svg>
<div class="a" style="left:1429.8px;top:162.2px;width:224px;height:224px;border-radius:50%;background:conic-gradient(from 90deg,#ff0010,#ff0080 8.330%,#ff00ff 16.670%,#8000ff 25%,#0000ff 33.330%,#0080ff 41.670%,#00ffff 50%,#00ff80 58.330%,#00ff00 66.670%,#80ff00 75%,#ffff00 83.330%,#ff8000 91.670%,#ff0010);-webkit-mask:radial-gradient(circle,transparent 94.8px,#000 95.8px,#000 111.8px,transparent 112.8px);mask:radial-gradient(circle,transparent 94.8px,#000 95.8px,#000 111.8px,transparent 112.8px)"></div>
<svg class="a" style="left:0;top:0" width="1817" height="830" viewBox="0 0 1817 830"><defs><linearGradient id="tv" gradientUnits="userSpaceOnUse" x1="0" y1="192.0" x2="0" y2="357.0"><stop offset="0" stop-color="#fff"/><stop offset="1" stop-color="#000"/></linearGradient><linearGradient id="th" gradientUnits="userSpaceOnUse" x1="1494.4" y1="0" x2="1637.4" y2="0"><stop offset="0" stop-color="#fff"/><stop offset=".2" stop-color="#999"/><stop offset=".45" stop-color="#3a3a3a"/><stop offset=".75" stop-color="#0c0c0c"/><stop offset="1" stop-color="#000"/></linearGradient><mask id="tm" maskUnits="userSpaceOnUse" x="1492.4" y="190.0" width="147.0" height="169.1"><rect x="1492.4" y="190.0" width="147.0" height="169.1" fill="url(#th)"/></mask></defs><path d="M1494.4 192.0L1637.4 274.5L1494.4 357.0z" fill="#ff0a24"/><path d="M1494.4 192.0L1637.4 274.5L1494.4 357.0z" fill="url(#tv)" mask="url(#tm)"/><circle cx="1646.500" cy="275.500" r="4.300" fill="none" stroke="#fff" stroke-width="1.200"/><circle cx="1495.200" cy="357.500" r="4.300" fill="none" stroke="#ddd" stroke-width="1.200"/></svg>
<svg class="a" style="left:1639px;top:430px" width="10" height="10" viewBox="0 0 10 10"><rect x=".5" y=".5" width="9" height="9" fill="none" stroke="#ccc" stroke-width="1"/><path d="M5 2.500v5M2.500 5h5" stroke="#ccc" stroke-width="1"/></svg>
<div class="a" style="left:1420px;top:459px;width:242px;height:371px;background:#4a4a4a"></div>
<div class="a" style="left:1461px;top:459px;width:201px;height:23px;background:#3e3e3e"></div>
<div class="a" style="left:1461px;top:459px;width:1px;height:23px;background:#353535"></div><div class="a" style="left:1509px;top:459px;width:1px;height:23px;background:#353535"></div>
<div class="t" style="left:1427.00px;top:466.01px;font-size:9.20px;font-weight:bold;letter-spacing:-0.528px;color:#f0f0f0;">Capas</div>
<div class="t" style="left:1468.30px;top:466.18px;font-size:9.00px;font-weight:bold;letter-spacing:-0.252px;color:#a9a9a9;">Canales</div>
<div class="a" style="left:1652.500px;top:467px;width:8px;height:7px;background:linear-gradient(#aaa 0 1.300px,transparent 1.300px 2.800px,#aaa 2.800px 4.100px,transparent 4.100px 5.600px,#aaa 5.600px 7px)"></div>
<div class="a" style="left:1423.0px;top:491.0px;width:91.5px;height:14.5px;background:#3c3c3c;border:1px solid #525252;border-radius:2px"></div>
<svg class="a" style="left:1428.500px;top:493.500px" width="10" height="10" viewBox="0 0 10 10"><circle cx="3.800" cy="3.800" r="2.900" fill="none" stroke="#eee" stroke-width="1.400"/><path d="M6 6l3.200 3.200" stroke="#eee" stroke-width="1.700"/></svg>
<div class="t" style="left:1441.00px;top:493.93px;font-size:9.30px;letter-spacing:-0.081px;color:#e4e4e4;">Tipo</div>
<svg class="a" style="left:1506.0px;top:497.0px" width="6" height="4" viewBox="0 0 6 4"><path d="M.5 .5L3 3 5.500 .5" fill="none" stroke="#ccc" stroke-width="1.1"/></svg>
<svg class="a" style="left:1535.500px;top:492.500px" width="11" height="10" viewBox="0 0 11 10"><rect x=".6" y=".6" width="9.800" height="8.300" fill="none" stroke="#ddd" stroke-width="1.200"/><path d="M2 7.500l2.200-3 1.500 1.800 1.300-1.300L9 7.500z" fill="#ddd"/></svg>
<svg class="a" style="left:1556.500px;top:493px" width="10" height="10" viewBox="-5 -5 10 10"><circle r="4.200" fill="none" stroke="#ddd" stroke-width="1.200"/><path d="M-3 3A4.200 4.200 0 0 1 3 -3z" fill="#ddd"/></svg>
<div class="t" style="left:1576.80px;top:492.14px;font-size:12.00px;font-weight:bold;color:#e0e0e0;font-family:'Liberation Serif',serif;">T</div>
<svg class="a" style="left:1595.500px;top:492px" width="12" height="12" viewBox="0 0 12 12"><rect x="2" y="2" width="8" height="8" fill="none" stroke="#ddd" stroke-width="1.300"/><g fill="#4a4a4a" stroke="#ddd" stroke-width=".9"><rect x=".5" y=".5" width="2.600" height="2.600"/><rect x="8.900" y=".5" width="2.600" height="2.600"/><rect x=".5" y="8.900" width="2.600" height="2.600"/><rect x="8.900" y="8.900" width="2.600" height="2.600"/></g></svg>
<svg class="a" style="left:1617px;top:491.500px" width="10" height="12" viewBox="0 0 10 12"><path d="M2.500 .6h4.500l2.400 2.400v8.400h-7z" fill="none" stroke="#ddd" stroke-width="1.200"/><path d="M6.500 .6v3h3" fill="none" stroke="#ddd" stroke-width="1"/><rect x=".3" y="6.500" width="5" height="5" fill="#ddd"/></svg>
<div class="a" style="left:1646px;top:490.500px;width:8px;height:14px;border-radius:4px;background:#353535"></div><div class="a" style="left:1646.500px;top:490px;width:7px;height:7px;border-radius:50%;background:#e8e8e8"></div>
<div class="a" style="left:1423.0px;top:515.0px;width:140.0px;height:14.5px;background:#3c3c3c;border:1px solid #525252;border-radius:2px"></div>
<div class="t" style="left:1428.60px;top:517.63px;font-size:9.30px;letter-spacing:-0.235px;color:#e4e4e4;">Normal</div>
<svg class="a" style="left:1555.5px;top:520.5px" width="6" height="4" viewBox="0 0 6 4"><path d="M.5 .5L3 3 5.500 .5" fill="none" stroke="#ccc" stroke-width="1.1"/></svg>
<div class="t" style="left:1567.70px;top:516.93px;font-size:9.30px;letter-spacing:-0.237px;color:#dcdcdc;">Opacidad:</div>
<div class="a" style="left:1611.5px;top:514.5px;width:31.0px;height:13.0px;background:#383838;border:1px solid #525252;border-radius:2px"></div>
<div class="a" style="left:1642.5px;top:514.5px;width:10.5px;height:13.0px;background:#444;border:1px solid #525252;border-radius:2px"></div>
<div class="t" style="left:1614.00px;top:518.02px;font-size:8.60px;letter-spacing:-0.331px;color:#eee;">100%</div>
<svg class="a" style="left:1644.8px;top:519.5px" width="6" height="4" viewBox="0 0 6 4"><path d="M.5 .5L3 3 5.500 .5" fill="none" stroke="#ccc" stroke-width="1.1"/></svg>
<div class="a" style="left:1424px;top:532.500px;width:236px;height:1px;background:#404040"></div>
<div class="t" style="left:1423.80px;top:540.13px;font-size:9.30px;letter-spacing:-0.256px;color:#dcdcdc;">Bloq.:</div>
<div class="a" style="left:1452px;top:540px;width:9.500px;height:9.500px;border:1px solid #ddd;background-color:#fff;background-image:linear-gradient(45deg,#333 25%,transparent 25%,transparent 75%,#333 75%),linear-gradient(45deg,#333 25%,transparent 25%,transparent 75%,#333 75%);background-size:5px 5px;background-position:0 0,2.500px 2.500px"></div>
<svg class="a" style="left:1469.500px;top:539px" width="12" height="12" viewBox="0 0 12 12"><path d="M10.800 .4c.5.400.4 1 0 1.400L5.500 7.500 4 6.200 9.500 .7c.4-.4.900-.6 1.300-.3z" fill="#ddd"/><path d="M3.300 6.800c1 .1 1.700 1 1.600 2-.4 2-2.600 2.700-4.700 2.300 1.300-.7 1.100-1.600 1.400-2.700.3-.9.900-1.600 1.700-1.600z" fill="#ddd"/></svg>
<svg class="a" style="left:1487.500px;top:539px" width="11" height="11" viewBox="-5.500 -5.500 11 11"><path d="M0 -4.500V4.500M-4.500 0H4.500" stroke="#ddd" stroke-width="1.100"/><path d="M0 -5.500l1.800 2h-3.600zM0 5.500l1.800-2h-3.600zM-5.500 0l2-1.800v3.600zM5.500 0l-2-1.800v3.600z" fill="#ddd"/></svg>
<svg class="a" style="left:1506px;top:539px" width="12" height="12" viewBox="0 0 12 12"><path d="M2.800 0V9.200H12M0 2.800H9.200V12" fill="none" stroke="#ddd" stroke-width="1.200"/><path d="M7 1l2.500.3M11 4l.3 1.500" stroke="#ddd" stroke-width=".8"/></svg>
<svg class="a" style="left:1525.500px;top:538.500px" width="10" height="12" viewBox="0 0 10 12"><rect x=".5" y="5" width="9" height="6.500" fill="#ddd"/><path d="M2.500 5V3.500a2.500 2.500 0 0 1 5 0V5" fill="none" stroke="#ddd" stroke-width="1.400"/><rect x="4.200" y="7.300" width="1.600" height="2" fill="#4a4a4a"/></svg>
<div class="t" style="left:1577.00px;top:540.13px;font-size:9.30px;letter-spacing:-0.446px;color:#dcdcdc;">Relleno:</div>
<div class="a" style="left:1611.5px;top:538.0px;width:31.0px;height:13.0px;background:#383838;border:1px solid #525252;border-radius:2px"></div>
<div class="a" style="left:1642.5px;top:538.0px;width:10.5px;height:13.0px;background:#444;border:1px solid #525252;border-radius:2px"></div>
<div class="t" style="left:1614.00px;top:541.52px;font-size:8.60px;letter-spacing:-0.331px;color:#eee;">100%</div>
<svg class="a" style="left:1644.8px;top:543.0px" width="6" height="4" viewBox="0 0 6 4"><path d="M.5 .5L3 3 5.500 .5" fill="none" stroke="#ccc" stroke-width="1.1"/></svg>
<div class="a" style="left:1420px;top:556.500px;width:233px;height:1px;background:#3c3c3c"></div>
<div class="a" style="left:1420px;top:582.5px;width:233px;height:1px;background:#3f3f3f"></div>
<div class="a" style="left:1427px;top:565.6px;width:10.500px;height:10.500px;border:1px solid #3a3a3a"></div>
<div class="a" style="left:1448px;top:561.9px;width:27px;height:18.500px;background-color:#fff;background-image:linear-gradient(45deg,#ccc 25%,transparent 25%,transparent 75%,#ccc 75%),linear-gradient(45deg,#ccc 25%,transparent 25%,transparent 75%,#ccc 75%);background-size:8px 8px;background-position:0 0,4px 4px;border:1px solid #2a2a2a"></div>
<div class="t" style="left:1481.40px;top:566.23px;font-size:9.30px;letter-spacing:-0.418px;color:#e6e6e6;">Capa 3</div>
<div class="a" style="left:1420px;top:608.7px;width:233px;height:1px;background:#3f3f3f"></div>
<svg class="a" style="left:1426.500px;top:593.1px" width="12" height="8" viewBox="0 0 12 8"><path d="M.3 4C2 1.200 4 .3 6 .3s4 .9 5.700 3.700C10 6.800 8 7.700 6 7.700S2 6.800 .3 4z" fill="#e4e4e4"/><circle cx="6" cy="4" r="2.300" fill="#4a4a4a"/><circle cx="6" cy="4" r="1.100" fill="#e4e4e4"/></svg>
<div class="a" style="left:1448px;top:587.9px;width:27px;height:18.500px;background-color:#fff;background-image:linear-gradient(45deg,#ccc 25%,transparent 25%,transparent 75%,#ccc 75%),linear-gradient(45deg,#ccc 25%,transparent 25%,transparent 75%,#ccc 75%);background-size:8px 8px;background-position:0 0,4px 4px;border:1px solid #2a2a2a"></div>
<div class="t" style="left:1481.40px;top:592.23px;font-size:9.30px;letter-spacing:-0.418px;color:#e6e6e6;">Capa 5</div>
<div class="a" style="left:1420px;top:629.5px;width:233px;height:1px;background:#3f3f3f"></div>
<svg class="a" style="left:1426.500px;top:616.5px" width="12" height="8" viewBox="0 0 12 8"><path d="M.3 4C2 1.200 4 .3 6 .3s4 .9 5.700 3.700C10 6.800 8 7.700 6 7.700S2 6.800 .3 4z" fill="#e4e4e4"/><circle cx="6" cy="4" r="2.300" fill="#4a4a4a"/><circle cx="6" cy="4" r="1.100" fill="#e4e4e4"/></svg>
<svg class="a" style="left:1449px;top:616.5px" width="5" height="8" viewBox="0 0 5 8"><path d="M1 .5L4 4 1 7.500" fill="none" stroke="#bbb" stroke-width="1"/></svg>
<svg class="a" style="left:1458px;top:615.5px" width="13" height="10" viewBox="0 0 13 10"><path d="M0 0h5l.8 1.500H13V10H0z" fill="#d2d2d2"/></svg>
<div class="t" style="left:1479.00px;top:615.63px;font-size:9.30px;letter-spacing:-0.484px;color:#e6e6e6;">Grupo 1</div>
<div class="a" style="left:1420px;top:655.0px;width:233px;height:1px;background:#3f3f3f"></div>
<svg class="a" style="left:1426.500px;top:639.7px" width="12" height="8" viewBox="0 0 12 8"><path d="M.3 4C2 1.200 4 .3 6 .3s4 .9 5.700 3.700C10 6.800 8 7.700 6 7.700S2 6.800 .3 4z" fill="#e4e4e4"/><circle cx="6" cy="4" r="2.300" fill="#4a4a4a"/><circle cx="6" cy="4" r="1.100" fill="#e4e4e4"/></svg>
<div class="a" style="left:1448px;top:634.5px;width:27px;height:18.500px;background-color:#fff;background-image:linear-gradient(45deg,#ccc 25%,transparent 25%,transparent 75%,#ccc 75%),linear-gradient(45deg,#ccc 25%,transparent 25%,transparent 75%,#ccc 75%);background-size:8px 8px;background-position:0 0,4px 4px;border:1px solid #2a2a2a"></div>
<div class="t" style="left:1481.40px;top:638.83px;font-size:9.30px;letter-spacing:-0.418px;color:#e6e6e6;">Capa 4</div>
<div class="a" style="left:1420px;top:682.2px;width:233px;height:1px;background:#3f3f3f"></div>
<svg class="a" style="left:1426.500px;top:665.7px" width="12" height="8" viewBox="0 0 12 8"><path d="M.3 4C2 1.200 4 .3 6 .3s4 .9 5.700 3.700C10 6.800 8 7.700 6 7.700S2 6.800 .3 4z" fill="#e4e4e4"/><circle cx="6" cy="4" r="2.300" fill="#4a4a4a"/><circle cx="6" cy="4" r="1.100" fill="#e4e4e4"/></svg>
<div class="a" style="left:1448px;top:660.5px;width:27px;height:18.500px;background-color:#fff;background-image:linear-gradient(45deg,#ccc 25%,transparent 25%,transparent 75%,#ccc 75%),linear-gradient(45deg,#ccc 25%,transparent 25%,transparent 75%,#ccc 75%);background-size:8px 8px;background-position:0 0,4px 4px;border:1px solid #2a2a2a"></div>
<div class="t" style="left:1481.40px;top:664.83px;font-size:9.30px;letter-spacing:-0.418px;color:#e6e6e6;">Capa 2</div>
<div class="a" style="left:1444.500px;top:683.2px;width:208px;height:24.3px;background:#626262"></div>
<div class="a" style="left:1420px;top:707.0px;width:233px;height:1px;background:#3f3f3f"></div>
<svg class="a" style="left:1426.500px;top:691.5px" width="12" height="8" viewBox="0 0 12 8"><path d="M.3 4C2 1.200 4 .3 6 .3s4 .9 5.700 3.700C10 6.800 8 7.700 6 7.700S2 6.800 .3 4z" fill="#e4e4e4"/><circle cx="6" cy="4" r="2.300" fill="#4a4a4a"/><circle cx="6" cy="4" r="1.100" fill="#e4e4e4"/></svg>
<div class="a" style="left:1448px;top:686.3px;width:27px;height:18.500px;background-color:#fff;background-image:linear-gradient(45deg,#ccc 25%,transparent 25%,transparent 75%,#ccc 75%),linear-gradient(45deg,#ccc 25%,transparent 25%,transparent 75%,#ccc 75%);background-size:8px 8px;background-position:0 0,4px 4px;border:1px solid #2a2a2a"></div><svg class="a" style="left:1445.500px;top:683.5px" width="32" height="24" viewBox="0 0 32 24"><path d="M.5 7V.5h10M21 .5h10.500V7M31.500 17v6.500H21M10.500 23.500H.5V17" fill="none" stroke="#eee" stroke-width="1"/></svg>
<div class="t" style="left:1481.40px;top:690.63px;font-size:9.30px;letter-spacing:-0.418px;color:#e6e6e6;">Capa 7</div>
<div class="a" style="left:1420px;top:733.0px;width:233px;height:1px;background:#3f3f3f"></div>
<svg class="a" style="left:1426.500px;top:717.6px" width="12" height="8" viewBox="0 0 12 8"><path d="M.3 4C2 1.200 4 .3 6 .3s4 .9 5.700 3.700C10 6.800 8 7.700 6 7.700S2 6.800 .3 4z" fill="#e4e4e4"/><circle cx="6" cy="4" r="2.300" fill="#4a4a4a"/><circle cx="6" cy="4" r="1.100" fill="#e4e4e4"/></svg>
<div class="a" style="left:1448px;top:712.4px;width:27px;height:18.500px;background-color:#fff;background-image:linear-gradient(45deg,#ccc 25%,transparent 25%,transparent 75%,#ccc 75%),linear-gradient(45deg,#ccc 25%,transparent 25%,transparent 75%,#ccc 75%);background-size:8px 8px;background-position:0 0,4px 4px;border:1px solid #2a2a2a"></div>
<div class="t" style="left:1481.40px;top:716.73px;font-size:9.30px;letter-spacing:-0.418px;color:#e6e6e6;">Capa 6</div>
<div class="a" style="left:1420px;top:759.0px;width:233px;height:1px;background:#3f3f3f"></div>
<svg class="a" style="left:1426.500px;top:743.6px" width="12" height="8" viewBox="0 0 12 8"><path d="M.3 4C2 1.200 4 .3 6 .3s4 .9 5.700 3.700C10 6.800 8 7.700 6 7.700S2 6.800 .3 4z" fill="#e4e4e4"/><circle cx="6" cy="4" r="2.300" fill="#4a4a4a"/><circle cx="6" cy="4" r="1.100" fill="#e4e4e4"/></svg>
<div class="a" style="left:1448px;top:738.4px;width:27px;height:18.500px;background-color:#fff;background-image:linear-gradient(45deg,#ccc 25%,transparent 25%,transparent 75%,#ccc 75%),linear-gradient(45deg,#ccc 25%,transparent 25%,transparent 75%,#ccc 75%);background-size:8px 8px;background-position:0 0,4px 4px;border:1px solid #2a2a2a"></div>
<div class="t" style="left:1481.40px;top:742.73px;font-size:9.30px;letter-spacing:-0.418px;color:#e6e6e6;">Capa 1</div>
<div class="a" style="left:1420px;top:785.9px;width:233px;height:1px;background:#3f3f3f"></div>
<svg class="a" style="left:1426.500px;top:769.7px" width="12" height="8" viewBox="0 0 12 8"><path d="M.3 4C2 1.200 4 .3 6 .3s4 .9 5.700 3.700C10 6.800 8 7.700 6 7.700S2 6.800 .3 4z" fill="#e4e4e4"/><circle cx="6" cy="4" r="2.300" fill="#4a4a4a"/><circle cx="6" cy="4" r="1.100" fill="#e4e4e4"/></svg>
<div class="a" style="left:1448px;top:764.5px;width:27px;height:18.500px;background:#fff;border:1px solid #2a2a2a"></div>
<div class="t" style="left:1481.40px;top:768.83px;font-size:9.30px;letter-spacing:-0.217px;color:#e6e6e6;">Fondo</div>
<div class="a" style="left:1443.500px;top:557px;width:1px;height:229.500px;background:#424242"></div>
<svg class="a" style="left:1630px;top:767.500px" width="9" height="11" viewBox="0 0 9 11"><rect x=".6" y="4.600" width="7.800" height="5.800" fill="none" stroke="#ddd" stroke-width="1.200"/><path d="M2.300 4.500V3a2.200 2.200 0 0 1 4.400 0v1.500" fill="none" stroke="#ddd" stroke-width="1.200"/><rect x="4" y="6.500" width="1" height="2" fill="#ddd"/></svg>
<div class="a" style="left:1420px;top:822px;width:242px;height:1px;background:#3c3c3c"></div>
<div class="a" style="left:1498.5px;top:828.300px;width:6.5px;height:3px;border:1px solid #bbb;border-bottom:none;border-radius:1.5px 1.5px 0 0"></div>
<div class="a" style="left:1522.0px;top:828.300px;width:3.0px;height:3px;border:1px solid #bbb;border-bottom:none;border-radius:1.5px 1.5px 0 0"></div>
<div class="a" style="left:1542.0px;top:828.300px;width:10.0px;height:3px;background:#ccc"></div>
<div class="a" style="left:1567.0px;top:828.300px;width:5.5px;height:3px;border:1px solid #bbb;border-bottom:none;border-radius:1.5px 1.5px 0 0"></div>
<div class="a" style="left:1587.0px;top:828.300px;width:10.5px;height:3px;border:1px solid #bbb;border-bottom:none;border-radius:1.5px 1.5px 0 0"></div>
<div class="a" style="left:1611.0px;top:828.300px;width:8.5px;height:3px;border:1px solid #bbb;border-bottom:none;border-radius:1.5px 1.5px 0 0"></div>
<div class="a" style="left:1634.5px;top:828.300px;width:5.5px;height:3px;border:1px solid #bbb;border-bottom:none;border-radius:1.5px 1.5px 0 0"></div>
<!-- video -->
<div class="a" style="left:1512.300px;top:50.700px;width:299.700px;height:204.300px;background:#1f1f1f;border-radius:5px;overflow:hidden">
<div class="a" style="left:7.500px;top:22.800px;width:18.400px;height:3.500px;background:#dedede"></div>
<div class="a" style="left:41.400px;top:16.300px;width:20.500px;height:10px;background:#0a8ff6"></div>
<div class="a" style="left:75.700px;top:11.100px;width:22px;height:15.200px;background:#dcdcdc"></div>
<svg class="a" style="left:0;top:35px" width="299.700" height="169.300" viewBox="-428 3.400 1463 826.600" preserveAspectRatio="none">
<defs>
<filter id="vb" x="-5%" y="-5%" width="110%" height="110%"><feGaussianBlur stdDeviation="6"/></filter>
<filter id="vb2" x="-5%" y="-5%" width="110%" height="110%"><feGaussianBlur stdDeviation="2.500"/></filter>
<filter id="vb4" x="-20%" y="-20%" width="140%" height="140%"><feGaussianBlur stdDeviation="14"/></filter>
<linearGradient id="wl" x1="0" x2="1"><stop offset="0" stop-color="#fff"/><stop offset=".5" stop-color="#fcfbfe"/><stop offset=".78" stop-color="#d2cdd3"/><stop offset="1" stop-color="#b6b1b7"/></linearGradient>
<linearGradient id="wr" x1="0" x2="1" y1="0" y2="0"><stop offset="0" stop-color="#bcb8bc"/><stop offset="1" stop-color="#aeaaaf"/></linearGradient>
<linearGradient id="sk" x1="0" x2="1" y1="0" y2=".6"><stop offset="0" stop-color="#fdeef1"/><stop offset=".45" stop-color="#f6dfe4"/><stop offset=".8" stop-color="#d7b9c0"/><stop offset="1" stop-color="#b0949b"/></linearGradient>
<linearGradient id="cu" x1="0" x2="1"><stop offset="0" stop-color="#151314"/><stop offset=".2" stop-color="#2b2729"/><stop offset=".32" stop-color="#161415"/><stop offset=".55" stop-color="#201d1f"/><stop offset=".7" stop-color="#2e2a2c"/><stop offset=".85" stop-color="#171516"/><stop offset="1" stop-color="#262224"/></linearGradient>
</defs>
<rect x="-428" y="0" width="1463" height="830" fill="#b7b3b8"/>
<rect x="-160" y="0" width="400" height="830" fill="url(#wl)"/>
<rect x="560" y="0" width="475" height="830" fill="url(#wr)"/>
<rect x="-428" y="0" width="281" height="830" fill="url(#cu)"/>
<ellipse cx="20" cy="560" rx="90" ry="120" fill="#fdf6f8" filter="url(#vb4)"/>
<g filter="url(#vb)">
<rect x="618" y="213" width="90" height="145" fill="#34343c"/><rect x="632" y="228" width="62" height="118" fill="#b9b5a8"/>
<path d="M585 385Q600 355 645 352L800 344Q835 348 872 420L1035 700V830H560z" fill="#0c0c0f"/>
<path d="M580 545L720 555Q840 600 940 700L992 830H540L600 700z" fill="#f3e2e4"/>
<path d="M905 720Q970 740 990 830H900z" fill="#9d9296"/>
<path d="M330 560L600 430L610 560L640 600L600 830H300L340 700z" fill="#b09fa2"/>
<path d="M340 590Q450 620 590 520L600 560Q480 640 350 640z" fill="#e9d6d9"/>
<ellipse cx="385" cy="690" rx="45" ry="38" fill="#c4605f"/><ellipse cx="545" cy="680" rx="45" ry="42" fill="#c46665"/>
<ellipse cx="465" cy="640" rx="60" ry="45" fill="#8f8689"/>
<path d="M395 710Q450 700 505 712L500 748Q450 738 400 748z" fill="#eee3e3"/>
<ellipse cx="450" cy="780" rx="80" ry="25" fill="#8f8689"/>
<path d="M290 775Q500 760 705 790V830H290z" fill="#101012"/>
<path d="M703 558l30 10-32 262h-32zM790 598l32 12-20 220h-30z" fill="#131315"/>
<path d="M320 0H560Q605 70 617 200L605 330L592 420Q575 490 520 540Q450 590 385 578Q345 560 335 520L318 470L270 455L225 400L228 290Q260 120 320 0z" fill="url(#sk)"/>
<path d="M560 330Q600 400 575 480Q540 540 470 575Q520 480 560 330z" fill="#b9979f" opacity=".7"/>
<path d="M340 540Q420 600 520 545Q470 600 385 590z" fill="#c9a9b0" opacity=".8"/>
<path d="M500 10Q560 0 585 60L612 180Q570 170 540 120z" fill="#cdbfc3"/>
<path d="M525 95Q560 50 600 85L612 150Q570 140 540 125z" fill="#7f7a80"/>
<path d="M598 225Q655 205 650 270Q640 320 605 335z" fill="#d7b6bb"/>
<path d="M245 0H335Q280 100 245 200Q225 280 218 335Q250 410 292 470Q330 560 372 600Q335 700 310 830H75L70 700Q100 620 130 520Q140 400 160 250Q200 100 245 0z" fill="#231f22"/>
<path d="M70 640Q140 620 150 700L130 830H75z" fill="#7d7477"/>
</g>
<g filter="url(#vb2)">
<path d="M215 120Q180 300 175 520" stroke="#4a4448" stroke-width="7" fill="none"/><path d="M255 60Q215 200 205 330" stroke="#3d383b" stroke-width="6" fill="none"/>
<ellipse cx="430" cy="322" rx="94" ry="78" fill="#fff" fill-opacity=".12" stroke="#121212" stroke-width="11"/>
<path d="M322 330Q330 400 270 412Q200 410 178 345Q180 300 220 290Q280 280 322 300" fill="#fff" fill-opacity=".15" stroke="#121212" stroke-width="12"/>
<path d="M520 272L622 205" stroke="#121212" stroke-width="11"/>
<path d="M355 350Q375 390 400 375" stroke="#1a1a1a" stroke-width="10" fill="none"/>
<path d="M366 262Q430 226 512 240Q480 272 420 280Q385 282 366 262z" fill="#241a1e"/>
<path d="M395 258Q440 244 480 252Q450 268 420 268z" fill="#5a4a50"/>
<path d="M228 286Q265 264 304 280Q272 300 238 298z" fill="#2e2226"/>
<path d="M350 214Q410 178 478 186" stroke="#2c2226" stroke-width="12" fill="none"/>
<path d="M238 246Q270 230 302 250" stroke="#3a2e34" stroke-width="10" fill="none"/>
<ellipse cx="450" cy="215" rx="60" ry="16" fill="#b7979f" opacity=".5" transform="rotate(-12 450 215)"/>
<circle cx="348" cy="265" r="8" fill="#1e1416"/>
<path d="M325 400Q355 425 385 405" stroke="#c59fa6" stroke-width="9" fill="none"/>
<path d="M323 470Q350 445 378 456Q400 448 432 470Q410 480 378 478Q345 480 323 470z" fill="#a3141e"/>
<path d="M335 478Q380 472 425 474Q410 510 375 513Q345 508 335 478z" fill="#e23a52"/>
<circle cx="378" cy="530" r="5" fill="#444"/>
<path d="M603 240q30-5 30 25l-12 60q-20 10-20-15z" fill="#18181a"/>
<path d="M595 330Q585 450 580 520T555 720L530 830" stroke="#1c1c1e" stroke-width="7" fill="none"/>
<path d="M250 590Q260 700 300 830" stroke="#3a3a3c" stroke-width="5" fill="none"/>
<path d="M545 670l18 4-8 60-16-4z" fill="#1c1c1e"/>
</g>
</svg>
<div class="a" style="left:0;top:173px;width:103.700px;height:31.300px;background:rgba(0,0,0,.83);border-radius:0 5px 0 0"></div>
</div>
<div class="t" style="left:1519.30px;top:231.79px;font-size:15.60px;letter-spacing:-0.507px;color:#fff;text-shadow:0 0 .5px #fff;">Raven Bazán</div>
<!-- top -->
<div class="t" style="left:107.30px;top:-0.46px;font-size:12.00px;font-weight:bold;letter-spacing:-0.083px;color:#fff;text-shadow:0 0 0.6px #fff;">Photoshop</div>
<div class="t" style="left:184.80px;top:-0.46px;font-size:12.00px;letter-spacing:0.163px;color:#fff;text-shadow:0 0 0.6px #fff;">Archivo</div>
<div class="t" style="left:240.60px;top:-0.46px;font-size:12.00px;letter-spacing:0.155px;color:#fff;text-shadow:0 0 0.6px #fff;">Edición</div>
<div class="t" style="left:295.60px;top:-0.46px;font-size:12.00px;letter-spacing:-0.007px;color:#fff;text-shadow:0 0 0.6px #fff;">Imagen</div>
<div class="t" style="left:350.60px;top:-0.46px;font-size:12.00px;letter-spacing:-0.098px;color:#fff;text-shadow:0 0 0.6px #fff;">Capa</div>
<div class="t" style="left:394.20px;top:-0.46px;font-size:12.00px;letter-spacing:0.227px;color:#fff;text-shadow:0 0 0.6px #fff;">Texto</div>
<div class="t" style="left:438.60px;top:-0.46px;font-size:12.00px;letter-spacing:0.095px;color:#fff;text-shadow:0 0 0.6px #fff;">Selección</div>
<div class="t" style="left:506.40px;top:-0.46px;font-size:12.00px;letter-spacing:0.145px;color:#fff;text-shadow:0 0 0.6px #fff;">Filtro</div>
<div class="t" style="left:549.30px;top:-0.46px;font-size:12.00px;letter-spacing:0.656px;color:#fff;text-shadow:0 0 0.6px #fff;">3D</div>
<svg class="a" style="left:79px;top:-3.300px" width="12.500" height="15" viewBox="0 0 170 200"><path fill="#fff" d="M150 105c0-23 19-34 20-35-11-16-28-18-34-18-14-2-28 8-35 8s-18-8-30-8C46 52 24 66 13 88c-15 26-4 65 11 86 7 10 16 22 27 22 11-1 15-7 28-7s17 7 28 7c12 0 19-11 26-21 8-12 12-24 12-24-1-1-23-9-23-35zM128 37c6-7 10-17 9-27-9 0-19 6-26 13-5 6-10 17-9 26 10 1 20-5 26-12z" transform="translate(0,-8)"/></svg>
<div class="t" style="left:1511.00px;top:-0.46px;font-size:12.00px;letter-spacing:-0.005px;color:#fff;text-shadow:0 0 0.6px #fff;">Mar 16:34</div>
<svg class="a" style="left:1380px;top:0" width="18" height="12" viewBox="0 0 18 12"><path d="M5.5 10.5a4.3 4.3 0 0 1-.8-8.5A5.2 5.2 0 0 1 14 3.2 3.7 3.7 0 0 1 13.6 10.5z" fill="#6f6c86" stroke="#b9b7c9" stroke-width="1"/><path d="M4.6 6.3c1.3-2.6 3.6-2.4 5 0s3.300 2.300 4.300 0" fill="none" stroke="#c8c6d6" stroke-width="1.1"/></svg>
<svg class="a" style="left:1405px;top:0" width="19" height="12" viewBox="0 0 19 12"><path d="M4.6 11a3.700 3.700 0 0 1-.5-7.300A5.300 5.300 0 0 1 14 2.600 4.200 4.200 0 0 1 14.300 11z" fill="#fff"/><rect x="8.700" y="1.500" width="1.400" height="4.800" fill="#56516a"/><rect x="8.700" y="7.400" width="1.400" height="1.500" fill="#56516a"/></svg>
<svg class="a" style="left:1431px;top:0" width="9" height="13" viewBox="0 0 9 13"><path d="M1 3l6 5-3.300 3V.5L7 3.500 1 8.500" fill="none" stroke="#fff" stroke-width="1.100"/></svg>
<div class="a" style="left:1441.500px;top:1px;width:5.500px;height:10.500px;border:1.200px solid #fff;border-radius:1px"></div><div class="a" style="left:1443.600px;top:7.500px;width:1.400px;height:1.600px;background:#fff"></div>
<svg class="a" style="left:1457px;top:0" width="17" height="12" viewBox="0 0 17 12"><path d="M4 8.500H1.200V.3h14.600v8.200H13" fill="none" stroke="#fff" stroke-width="1.300"/><path d="M8.500 5.800l4.300 5.400H4.200z" fill="#fff"/></svg>
<svg class="a" style="left:1482px;top:0" width="19" height="12" viewBox="0 0 19 12"><g fill="none" stroke="#fff" stroke-width="1.700" stroke-linecap="round"><path d="M1.500 3.200a11.500 11.500 0 0 1 16 0"/><path d="M4.300 6a7.500 7.500 0 0 1 10.400 0"/><path d="M7 8.600a3.600 3.600 0 0 1 5 0"/></g><circle cx="9.500" cy="10.300" r="1.100" fill="#fff"/></svg>
<svg class="a" style="left:1581px;top:0" width="14" height="13" viewBox="0 0 14 13"><circle cx="5.600" cy="4.600" r="4" fill="none" stroke="#fff" stroke-width="1.400"/><path d="M8.500 7.600l4 4.200" stroke="#fff" stroke-width="1.600" stroke-linecap="round"/></svg>
<div class="a" style="left:1608px;top:-2.500px;width:14.500px;height:14.500px;border-radius:50%;background:radial-gradient(circle at 55% 45%,#fff 0,#f2a0e0 18%,#8a6fe8 40%,#3d7be0 62%,#5a4a8a 80%,#b0aac0 100%)"></div>
<svg class="a" style="left:1631px;top:0" width="17" height="11" viewBox="0 0 17 11"><g fill="#aaa7b8"><rect x="0" y="1" width="1.800" height="1.600"/><rect x="3.500" y="1" width="13" height="1.600"/><rect x="0" y="4.600" width="1.800" height="1.600"/><rect x="3.500" y="4.600" width="13" height="1.600"/><rect x="0" y="8.200" width="1.800" height="1.600"/><rect x="3.500" y="8.200" width="13" height="1.600"/></g></svg>
<div class="a" style="left:70.1px;top:20px;width:9.600px;height:9.600px;border-radius:50%;background:#d64545"></div>
<div class="a" style="left:87.1px;top:20px;width:9.600px;height:9.600px;border-radius:50%;background:#d8932e"></div>
<div class="a" style="left:103.9px;top:20px;width:9.600px;height:9.600px;border-radius:50%;background:#3fa83a"></div>
<div class="t" style="left:803.60px;top:19.44px;font-size:12.00px;letter-spacing:-0.341px;color:#e6e6e6;">Adobe Photoshop 2020</div>
<div class="a" style="left:580px;top:0;width:412px;height:26px;background:#6bb83c;border-radius:0 0 0 4px"></div>
<div class="a" style="left:992px;top:0;width:156px;height:26px;background:#232326;border-radius:0 0 5px 0"></div>
<div class="t" style="left:582.00px;top:-0.46px;font-size:12.00px;letter-spacing:-0.117px;color:rgba(255,255,255,.22);">Vista</div>
<div class="t" style="left:624.50px;top:-0.46px;font-size:12.00px;letter-spacing:-0.176px;color:rgba(255,255,255,.22);">Ventana</div>
<div class="t" style="left:684.00px;top:-0.46px;font-size:12.00px;letter-spacing:-0.704px;color:rgba(255,255,255,.22);">Ayuda</div>
<div class="t" style="left:593.00px;top:2.31px;font-size:18.30px;letter-spacing:0.354px;color:#1c2a1c;">You are viewing Raven Bazán's screen</div>
<div class="t" style="left:1001.00px;top:2.31px;font-size:18.30px;letter-spacing:0.684px;color:#fff;text-shadow:0 0 0.500px #fff;">View Options</div>
<svg class="a" style="left:1122px;top:5px" width="18" height="12" viewBox="0 0 18 12"><path d="M2 2.500l7 6.500 7-6.500" fill="none" stroke="#fff" stroke-width="2.300" stroke-linecap="round" stroke-linejoin="round"/></svg>
<svg class="a" style="left:927px;top:2px" width="20" height="18" viewBox="0 0 20 18"><rect x="6.500" y="2" width="6" height="9.500" rx="3" fill="#2f4a26"/><path d="M4.500 8.500a5 5 0 0 0 10 0M9.500 13.500v3M6.500 16.500h6" fill="none" stroke="#2f4a26" stroke-width="1.300"/><path d="M2 16.500L17 1.500" stroke="#2f4a26" stroke-width="1.300"/><path d="M3 17.200L18 2.200" stroke="#6bb83c" stroke-width="1"/></svg>
<svg class="a" style="left:955px;top:3px" width="22" height="16" viewBox="0 0 22 16"><path d="M5.500 15a4.500 4.500 0 0 1-.8-8.900A6 6 0 0 1 16 5.300 4.900 4.900 0 0 1 16.500 15z" fill="#d9ecd0" stroke="#c4e0b6" stroke-width="1"/><circle cx="10.800" cy="9.500" r="2.700" fill="#f0323c"/></svg>
<div class="a" style="left:22.300px;top:19.300px;width:16px;height:16px;border-radius:50%;background:radial-gradient(circle at 50% 30%,#f6b0b0 0,#e87378 35%,#d2525a 70%,#b83a44 100%)"></div>
<div class="t" style="left:44.70px;top:18.81px;font-size:17.00px;letter-spacing:-0.023px;color:#fff;text-shadow:0 0 0.500px #fff;">Recording</div>
<svg class="a" style="left:1783px;top:18px" width="17" height="16" viewBox="0 0 17 16"><g fill="#fff"><path d="M.8.800h5l-1.800 1.800 2.600 2.600-1.400 1.400L2.600 4 .8 5.800z"/><path d="M16.200.800v5L14.400 4l-2.600 2.600-1.400-1.400L13 2.600 11.200.800z"/><path d="M.8 15.200v-5L2.600 12l2.600-2.600 1.400 1.400L4 13.400l1.800 1.800z"/><path d="M16.200 15.200h-5l1.800-1.800-2.600-2.600 1.400-1.400 2.600 2.600 1.800-1.800z"/></g></svg>
</body></html>
